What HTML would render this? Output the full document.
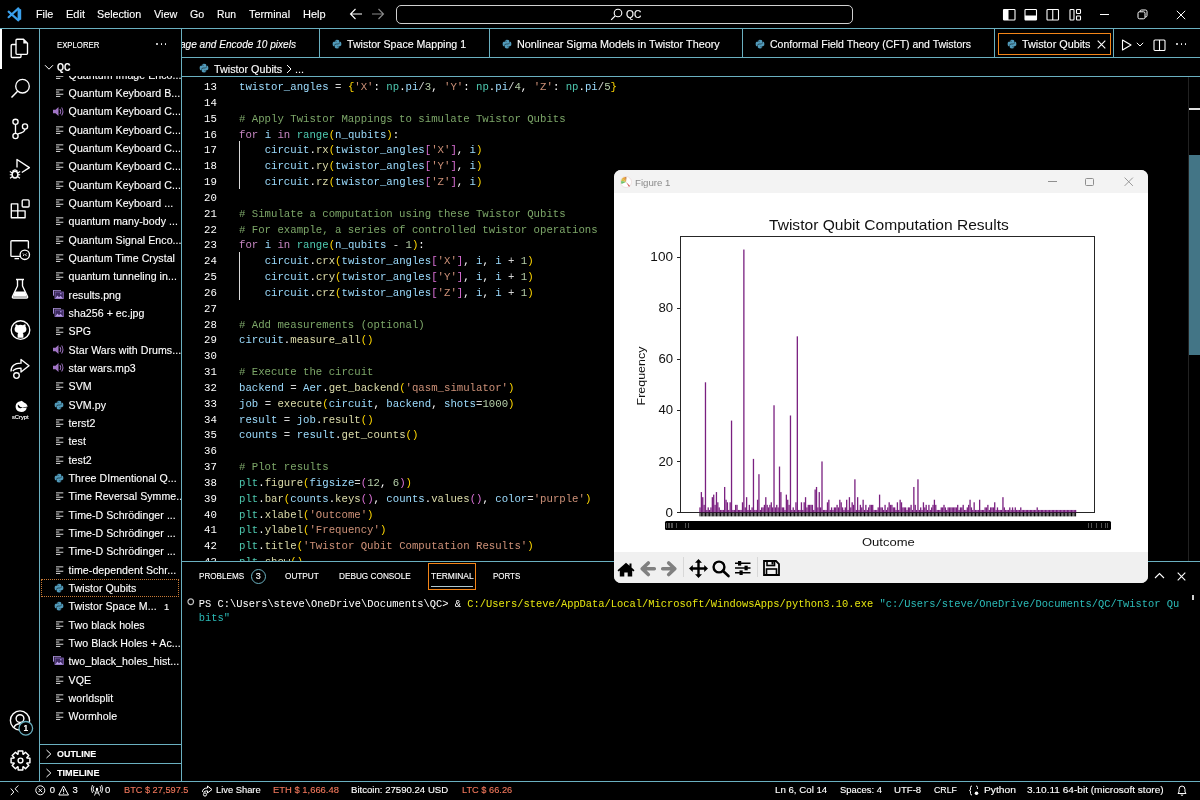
<!DOCTYPE html>
<html><head><meta charset="utf-8"><style>
html,body{margin:0;padding:0;}
body{width:1200px;height:800px;background:#000;position:relative;overflow:hidden;font-family:"Liberation Sans",sans-serif;color:#fff;}
.a{position:absolute;white-space:nowrap;}
.s{-webkit-text-stroke:0.12px currentColor;}
#w{position:absolute;left:0;top:0;width:1200px;height:800px;will-change:transform;background:#000;}
svg.a{overflow:visible;}
</style></head><body><div id="w">
<svg class="a" style="left:7px;top:7px;" width="15" height="15" viewBox="0 0 15 15"><g fill="#3aa0ec"><path d="M10.6 0.8 L14.2 2.4 V12.4 L10.6 14 Z"/></g><path d="M11.4 1.4 L1.6 10.2 M1.6 4.6 L11.4 13.4" stroke="#3aa0ec" stroke-width="2.1" stroke-linecap="round"/></svg>
<div class="a s" style="left:35.70px;transform-origin:0 0;transform:scaleX(0.9984);top:4.06px;line-height:20px;font-size:10.8px;color:#ffffff;">File</div>
<div class="a s" style="left:65.70px;transform-origin:0 0;transform:scaleX(1.0211);top:4.06px;line-height:20px;font-size:10.8px;color:#ffffff;">Edit</div>
<div class="a s" style="left:96.90px;transform-origin:0 0;transform:scaleX(0.9944);top:4.06px;line-height:20px;font-size:10.8px;color:#ffffff;">Selection</div>
<div class="a s" style="left:153.80px;transform-origin:0 0;transform:scaleX(1.0028);top:4.06px;line-height:20px;font-size:10.8px;color:#ffffff;">View</div>
<div class="a s" style="left:189.80px;transform-origin:0 0;transform:scaleX(0.9905);top:4.06px;line-height:20px;font-size:10.8px;color:#ffffff;">Go</div>
<div class="a s" style="left:217.00px;transform-origin:0 0;transform:scaleX(0.9609);top:4.06px;line-height:20px;font-size:10.8px;color:#ffffff;">Run</div>
<div class="a s" style="left:249.00px;transform-origin:0 0;transform:scaleX(1.0067);top:4.06px;line-height:20px;font-size:10.8px;color:#ffffff;">Terminal</div>
<div class="a s" style="left:302.50px;transform-origin:0 0;transform:scaleX(1.0171);top:4.06px;line-height:20px;font-size:10.8px;color:#ffffff;">Help</div>
<svg class="a" style="left:349px;top:8px;" width="14" height="12" viewBox="0 0 14 12"><path d="M1.5 6 H13 M6.5 1 L1.5 6 L6.5 11" stroke="#fff" stroke-width="1.1" fill="none"/></svg>
<svg class="a" style="left:371px;top:8px;" width="14" height="12" viewBox="0 0 14 12"><path d="M1 6 H12.5 M7.5 1 L12.5 6 L7.5 11" stroke="#8a8a8a" stroke-width="1.1" fill="none"/></svg>
<div class="a" style="left:395.5px;top:4.5px;width:457px;height:19.3px;background:transparent;box-sizing:border-box;border:1px solid #d0d0d0;border-radius:5px;"></div>
<svg class="a" style="left:610px;top:8px;" width="13" height="13" viewBox="0 0 13 13"><circle cx="8" cy="5" r="3.8" stroke="#fff" stroke-width="1.1" fill="none"/><path d="M5.2 7.8 L1.2 11.8" stroke="#fff" stroke-width="1.2"/></svg>
<div class="a s" style="left:625.80px;transform-origin:0 0;transform:scaleX(1.0143);top:5.14px;line-height:20px;font-size:10px;color:#ffffff;">QC</div>
<svg class="a" style="left:1002px;top:8px;" width="14" height="13" viewBox="0 0 14 13"><rect x="1.5" y="1.5" width="11.5" height="10.5" stroke="#fff" stroke-width="1.1" fill="none" rx="0.8"/><rect x="1.5" y="1.5" width="5" height="10.5" fill="#fff"/></svg>
<svg class="a" style="left:1024px;top:8px;" width="14" height="13" viewBox="0 0 14 13"><rect x="1" y="1.5" width="11.5" height="10.5" stroke="#fff" stroke-width="1.1" fill="none" rx="0.8"/><rect x="1" y="7.5" width="11.5" height="4.5" fill="#fff"/></svg>
<svg class="a" style="left:1045.5px;top:8px;" width="14" height="13" viewBox="0 0 14 13"><rect x="1" y="1.5" width="11.5" height="10.5" stroke="#fff" stroke-width="1.1" fill="none" rx="0.8"/><path d="M6.75 1.5 V12" stroke="#fff" stroke-width="1.1"/></svg>
<svg class="a" style="left:1068.5px;top:8px;" width="13" height="13" viewBox="0 0 13 13"><rect x="1" y="1.5" width="4" height="10.5" stroke="#fff" stroke-width="1.1" fill="none" rx="0.8"/><rect x="7.5" y="1.5" width="4" height="4" stroke="#fff" stroke-width="1.1" fill="none" rx="0.8"/><rect x="7.5" y="8" width="4" height="4" stroke="#fff" stroke-width="1.1" fill="none" rx="0.8"/></svg>
<div class="a" style="left:1100px;top:13.5px;width:9px;height:1px;background:#ffffff;"></div>
<svg class="a" style="left:1137px;top:9px;" width="12" height="11" viewBox="0 0 12 11"><rect x="1" y="2.8" width="7" height="7" rx="1.5" stroke="#fff" stroke-width="1" fill="none"/><path d="M3 2.8 V2.5 Q3 1 4.5 1 H8.5 Q10 1 10 2.5 V6.5 Q10 8 8.5 8 H8" stroke="#fff" stroke-width="1" fill="none"/></svg>
<svg class="a" style="left:1176px;top:9.5px;" width="10" height="10" viewBox="0 0 10 10"><path d="M0.8 0.8 L9.2 9.2 M9.2 0.8 L0.8 9.2" stroke="#fff" stroke-width="1"/></svg>
<div class="a" style="left:0px;top:28px;width:1200px;height:1px;background:#6AB0C0;"></div>
<div class="a" style="left:39px;top:29px;width:1px;height:752px;background:#6AB0C0;"></div>
<div class="a" style="left:181px;top:29px;width:1px;height:752px;background:#6AB0C0;"></div>
<div class="a" style="left:182px;top:57px;width:1018px;height:1px;background:#6AB0C0;"></div>
<div class="a" style="left:182px;top:76px;width:1018px;height:1px;background:#6AB0C0;"></div>
<div class="a" style="left:182px;top:561px;width:1018px;height:1px;background:#6AB0C0;"></div>
<div class="a" style="left:0px;top:781px;width:1200px;height:1px;background:#6AB0C0;"></div>
<div class="a" style="left:40px;top:744px;width:141px;height:1px;background:#6AB0C0;"></div>
<div class="a" style="left:40px;top:763px;width:141px;height:1px;background:#6AB0C0;"></div>
<div class="a" style="left:0px;top:29px;width:2px;height:40px;background:#ffffff;"></div>
<svg class="a" style="left:10px;top:38px;" width="20" height="22" viewBox="0 0 20 22"><path stroke="#fff" stroke-width="1.35" fill="none" stroke-linejoin="round" d="M6.2 6.5 H2.2 Q1.2 6.5 1.2 7.5 V18.5 Q1.2 19.5 2.2 19.5 H10 Q11 19.5 11 18.5 V16.3"/><path stroke="#fff" stroke-width="1.35" fill="none" stroke-linejoin="round" d="M6 2.2 Q6 1.2 7 1.2 H13.5 L17.5 5.2 V15.3 Q17.5 16.3 16.5 16.3 H7 Q6 16.3 6 15.3 Z"/><path fill="#fff" d="M13.3 1.5 L17.2 5.4 H13.3 Z"/></svg>
<svg class="a" style="left:10px;top:78px;" width="22" height="22" viewBox="0 0 22 22"><circle cx="12.5" cy="8.2" r="6.8" stroke="#fff" stroke-width="1.35" fill="none" stroke-linejoin="round"/><path d="M7.6 13.2 L1.5 19.5" stroke="#fff" stroke-width="1.5"/></svg>
<svg class="a" style="left:10px;top:118px;" width="20" height="22" viewBox="0 0 20 22"><circle cx="5.5" cy="3.8" r="2.6" stroke="#fff" stroke-width="1.35" fill="none" stroke-linejoin="round"/><circle cx="5.5" cy="18" r="2.6" stroke="#fff" stroke-width="1.35" fill="none" stroke-linejoin="round"/><circle cx="15" cy="8.5" r="2.6" stroke="#fff" stroke-width="1.35" fill="none" stroke-linejoin="round"/><path stroke="#fff" stroke-width="1.35" fill="none" stroke-linejoin="round" d="M5.5 6.4 V15.4 M15 11.1 Q15 14.5 8 15.8"/></svg>
<svg class="a" style="left:9px;top:158px;" width="22" height="22" viewBox="0 0 22 22"><path stroke="#fff" stroke-width="1.35" fill="none" stroke-linejoin="round" d="M8 9.4 V1.5 L20.4 9.6 L12.8 14.5"/><path stroke="#fff" stroke-width="1.4" fill="none" d="M3.6 13.2 Q6 10.6 8.4 13.2"/><ellipse cx="6" cy="16.6" rx="2.9" ry="3.4" stroke="#fff" stroke-width="1.5" fill="none"/><path stroke="#fff" stroke-width="1.1" fill="none" d="M0.8 13.6 L3 14.8 M0.8 16.8 H3 M1 20.2 L3.2 18.8 M11.2 13.6 L9 14.8 M11.2 16.8 H9 M11 20.2 L8.8 18.8"/></svg>
<svg class="a" style="left:10px;top:198px;" width="21" height="22" viewBox="0 0 21 22"><path stroke="#fff" stroke-width="1.35" fill="none" stroke-linejoin="round" d="M1.3 5.9 H7.8 V19.7 H1.3 Z M1.3 12.8 H15.1 V19.7 H7.8"/><rect x="12.2" y="1.9" width="6.9" height="7.1" rx="1" stroke="#fff" stroke-width="1.35" fill="none" stroke-linejoin="round"/></svg>
<svg class="a" style="left:9px;top:239px;" width="22" height="22" viewBox="0 0 22 22"><path stroke="#fff" stroke-width="1.35" fill="none" stroke-linejoin="round" d="M12 17.3 H2.8 Q1.9 17.3 1.9 16.4 V2.6 Q1.9 1.7 2.8 1.7 H18.5 Q19.4 1.7 19.4 2.6 V9.5"/><path stroke="#fff" stroke-width="1.35" fill="none" stroke-linejoin="round" d="M5.5 19.6 H10"/><circle cx="15.8" cy="15.8" r="4.7" stroke="#fff" stroke-width="1.35" fill="none" stroke-linejoin="round"/><path stroke="#fff" stroke-width="0.9" fill="none" d="M14 14.5 L15.2 15.8 L14 17.1 M17.6 14.5 L16.4 15.8 L17.6 17.1"/></svg>
<svg class="a" style="left:11px;top:278px;" width="18" height="22" viewBox="0 0 18 22"><path stroke="#fff" stroke-width="1.35" fill="none" stroke-linejoin="round" d="M6.5 1.5 V8 L1.5 18.5 Q1 20 2.5 20 H15.5 Q17 20 16.5 18.5 L11.5 8 V1.5 M5 1.5 H13"/><path fill="#fff" d="M4 13.5 H14 L16 18.8 H2 Z"/></svg>
<svg class="a" style="left:10px;top:319px;" width="21" height="22" viewBox="0 0 21 22"><circle cx="10.5" cy="11" r="9.3" stroke="#fff" stroke-width="1.35" fill="none" stroke-linejoin="round"/><path fill="#fff" d="M7.6 18.8 V15.6 Q7.6 14.6 8.3 14 Q5 13.6 4.6 10.8 Q4.4 8.8 5.5 7.6 Q5.2 6.5 5.7 5.3 Q6.8 5.3 8 6.2 Q10.5 5.5 13 6.2 Q14.2 5.3 15.3 5.3 Q15.8 6.5 15.5 7.6 Q16.6 8.8 16.4 10.8 Q16 13.6 12.7 14 Q13.4 14.6 13.4 15.6 V18.8 Z"/></svg>
<svg class="a" style="left:9px;top:357px;" width="22" height="23" viewBox="0 0 22 23"><path stroke="#fff" stroke-width="1.35" fill="none" stroke-linejoin="round" d="M2 14.5 Q2 6 12 6.2 V2.5 L20 8.8 L12 15 V11.2 Q6.5 11 3.8 14"/><circle cx="7.5" cy="18.5" r="2.8" stroke="#fff" stroke-width="1.35" fill="none" stroke-linejoin="round"/></svg>
<svg class="a" style="left:13px;top:400px;" width="16" height="14" viewBox="0 0 16 14"><path fill="#fff" d="M7.5 1.2 Q3.2 1.6 2.6 6 Q2.4 10 6 11.6 Q9.5 12.8 12.4 10.4 Q13.8 9 13.6 7.2 Q11.5 8.2 9.5 7.8 Q12.5 6.6 14.8 6.4 Q13.5 3.4 11 2.6 Q10 1.2 8.3 0.8 Z"/><path fill="#000" d="M5 4.5 Q6.5 7.2 10 7.4 Q7.2 8.8 5.4 7.6 Q4.2 6.2 5 4.5 Z"/></svg>
<div class="a s" style="left:12.00px;transform-origin:0 0;transform:scaleX(1.1467);top:406.87px;line-height:20px;font-size:5px;color:#ffffff;">sCrypt</div>
<svg class="a" style="left:9px;top:709px;" width="28" height="28" viewBox="0 0 28 28"><circle cx="11" cy="11.5" r="9.6" stroke="#fff" stroke-width="1.4" fill="none"/><circle cx="11" cy="9.6" r="3.9" stroke="#fff" stroke-width="1.4" fill="none"/><path stroke="#fff" stroke-width="1.4" fill="none" d="M5 18.5 Q6.5 14.8 11 14.8 Q13 14.8 14 15.3"/><circle cx="16.8" cy="19.3" r="6.8" fill="#000" stroke="#6AB0C0" stroke-width="1.3"/></svg>
<div class="a s" style="left:23.60px;top:718.42px;line-height:20px;font-size:8.3px;color:#ffffff;font-weight:bold;">1</div>
<svg class="a" style="left:9.5px;top:750.3px;" width="21" height="21" viewBox="0 0 21 21"><path stroke="#fff" stroke-width="1.45" fill="none" stroke-linejoin="round" d="M16.96 8.07 L19.92 8.19 L19.92 12.81 L16.96 12.93 L16.79 13.35 L18.79 15.53 L15.53 18.79 L13.35 16.79 L12.93 16.96 L12.81 19.92 L8.19 19.92 L8.07 16.96 L7.65 16.79 L5.47 18.79 L2.21 15.53 L4.21 13.35 L4.04 12.93 L1.08 12.81 L1.08 8.19 L4.04 8.07 L4.21 7.65 L2.21 5.47 L5.47 2.21 L7.65 4.21 L8.07 4.04 L8.19 1.08 L12.81 1.08 L12.93 4.04 L13.35 4.21 L15.53 2.21 L18.79 5.47 L16.79 7.65 Z"/><circle cx="10.5" cy="10.5" r="2.4" stroke="#fff" stroke-width="1.45" fill="none"/></svg>
<div class="a s" style="left:56.70px;transform-origin:0 0;transform:scaleX(0.8089);top:34.57px;line-height:20px;font-size:9.6px;color:#ffffff;">EXPLORER</div>
<div class="a" style="left:156.3px;top:43.2px;width:1.6px;height:1.6px;background:#ffffff;border-radius:1px;"></div>
<div class="a" style="left:160.60000000000002px;top:43.2px;width:1.6px;height:1.6px;background:#ffffff;border-radius:1px;"></div>
<div class="a" style="left:164.9px;top:43.2px;width:1.6px;height:1.6px;background:#ffffff;border-radius:1px;"></div>
<svg class="a" style="left:43.5px;top:64px;" width="10" height="7" viewBox="0 0 10 7"><path d="M1 1.2 L5 5.2 L9 1.2" stroke="#fff" stroke-width="1" fill="none"/></svg>
<div class="a s" style="left:56.90px;transform-origin:0 0;transform:scaleX(0.9000);top:58.44px;line-height:20px;font-size:10px;color:#ffffff;font-weight:bold;">QC</div>
<div class="a" style="left:40px;top:76px;width:141px;height:668px;overflow:hidden">
<svg class="a" style="left:16px;top:-5.432999999999993px;" width="8" height="9" viewBox="0 0 8 9"><g fill="#c8c8c8"><rect x="0" y="0.3" width="7.3" height="1.1"/><rect x="0" y="2.5" width="3.3" height="1.1"/><rect x="0" y="4.7" width="7.3" height="1.1"/><rect x="0" y="6.9" width="4.3" height="1.1"/></g></svg>
<div class="a s" style="left:28.60px;top:-11.31px;line-height:20px;font-size:10.6px;color:#ffffff;letter-spacing:0.050px;">Quantum Image Enco...</div>
<svg class="a" style="left:16px;top:12.900000000000006px;" width="8" height="9" viewBox="0 0 8 9"><g fill="#c8c8c8"><rect x="0" y="0.3" width="7.3" height="1.1"/><rect x="0" y="2.5" width="3.3" height="1.1"/><rect x="0" y="4.7" width="7.3" height="1.1"/><rect x="0" y="6.9" width="4.3" height="1.1"/></g></svg>
<div class="a s" style="left:28.60px;top:7.03px;line-height:20px;font-size:10.6px;color:#ffffff;letter-spacing:0.050px;">Quantum Keyboard B...</div>
<svg class="a" style="left:13px;top:30.733000000000004px;" width="11" height="9" viewBox="0 0 11 9"><g fill="#a074c4"><path d="M0 2.8 H2.5 L5.5 0 V9 L2.5 6.2 H0 Z"/><path d="M6.5 2.2 Q8 4.5 6.5 6.8 L7.3 7.3 Q9.2 4.5 7.3 1.7 Z"/><path d="M8.2 0.8 Q10.8 4.5 8.2 8.2 L9 8.8 Q11.8 4.5 9 0.2 Z"/></g></svg>
<div class="a s" style="left:28.60px;top:25.36px;line-height:20px;font-size:10.6px;color:#ffffff;letter-spacing:0.050px;">Quantum Keyboard C...</div>
<svg class="a" style="left:16px;top:49.56599999999999px;" width="8" height="9" viewBox="0 0 8 9"><g fill="#c8c8c8"><rect x="0" y="0.3" width="7.3" height="1.1"/><rect x="0" y="2.5" width="3.3" height="1.1"/><rect x="0" y="4.7" width="7.3" height="1.1"/><rect x="0" y="6.9" width="4.3" height="1.1"/></g></svg>
<div class="a s" style="left:28.60px;top:43.69px;line-height:20px;font-size:10.6px;color:#ffffff;letter-spacing:0.050px;">Quantum Keyboard C...</div>
<svg class="a" style="left:16px;top:67.899px;" width="8" height="9" viewBox="0 0 8 9"><g fill="#c8c8c8"><rect x="0" y="0.3" width="7.3" height="1.1"/><rect x="0" y="2.5" width="3.3" height="1.1"/><rect x="0" y="4.7" width="7.3" height="1.1"/><rect x="0" y="6.9" width="4.3" height="1.1"/></g></svg>
<div class="a s" style="left:28.60px;top:62.03px;line-height:20px;font-size:10.6px;color:#ffffff;letter-spacing:0.050px;">Quantum Keyboard C...</div>
<svg class="a" style="left:16px;top:86.23199999999997px;" width="8" height="9" viewBox="0 0 8 9"><g fill="#c8c8c8"><rect x="0" y="0.3" width="7.3" height="1.1"/><rect x="0" y="2.5" width="3.3" height="1.1"/><rect x="0" y="4.7" width="7.3" height="1.1"/><rect x="0" y="6.9" width="4.3" height="1.1"/></g></svg>
<div class="a s" style="left:28.60px;top:80.36px;line-height:20px;font-size:10.6px;color:#ffffff;letter-spacing:0.050px;">Quantum Keyboard C...</div>
<svg class="a" style="left:16px;top:104.565px;" width="8" height="9" viewBox="0 0 8 9"><g fill="#c8c8c8"><rect x="0" y="0.3" width="7.3" height="1.1"/><rect x="0" y="2.5" width="3.3" height="1.1"/><rect x="0" y="4.7" width="7.3" height="1.1"/><rect x="0" y="6.9" width="4.3" height="1.1"/></g></svg>
<div class="a s" style="left:28.60px;top:98.69px;line-height:20px;font-size:10.6px;color:#ffffff;letter-spacing:0.050px;">Quantum Keyboard C...</div>
<svg class="a" style="left:16px;top:122.89799999999997px;" width="8" height="9" viewBox="0 0 8 9"><g fill="#c8c8c8"><rect x="0" y="0.3" width="7.3" height="1.1"/><rect x="0" y="2.5" width="3.3" height="1.1"/><rect x="0" y="4.7" width="7.3" height="1.1"/><rect x="0" y="6.9" width="4.3" height="1.1"/></g></svg>
<div class="a s" style="left:28.60px;top:117.03px;line-height:20px;font-size:10.6px;color:#ffffff;letter-spacing:0.050px;">Quantum Keyboard ...</div>
<svg class="a" style="left:16px;top:141.231px;" width="8" height="9" viewBox="0 0 8 9"><g fill="#c8c8c8"><rect x="0" y="0.3" width="7.3" height="1.1"/><rect x="0" y="2.5" width="3.3" height="1.1"/><rect x="0" y="4.7" width="7.3" height="1.1"/><rect x="0" y="6.9" width="4.3" height="1.1"/></g></svg>
<div class="a s" style="left:28.60px;top:135.36px;line-height:20px;font-size:10.6px;color:#ffffff;letter-spacing:0.050px;">quantum many-body ...</div>
<svg class="a" style="left:16px;top:159.56399999999996px;" width="8" height="9" viewBox="0 0 8 9"><g fill="#c8c8c8"><rect x="0" y="0.3" width="7.3" height="1.1"/><rect x="0" y="2.5" width="3.3" height="1.1"/><rect x="0" y="4.7" width="7.3" height="1.1"/><rect x="0" y="6.9" width="4.3" height="1.1"/></g></svg>
<div class="a s" style="left:28.60px;top:153.69px;line-height:20px;font-size:10.6px;color:#ffffff;letter-spacing:0.050px;">Quantum Signal Enco...</div>
<svg class="a" style="left:16px;top:177.897px;" width="8" height="9" viewBox="0 0 8 9"><g fill="#c8c8c8"><rect x="0" y="0.3" width="7.3" height="1.1"/><rect x="0" y="2.5" width="3.3" height="1.1"/><rect x="0" y="4.7" width="7.3" height="1.1"/><rect x="0" y="6.9" width="4.3" height="1.1"/></g></svg>
<div class="a s" style="left:28.60px;top:172.02px;line-height:20px;font-size:10.6px;color:#ffffff;letter-spacing:0.050px;">Quantum Time Crystal</div>
<svg class="a" style="left:16px;top:196.22999999999996px;" width="8" height="9" viewBox="0 0 8 9"><g fill="#c8c8c8"><rect x="0" y="0.3" width="7.3" height="1.1"/><rect x="0" y="2.5" width="3.3" height="1.1"/><rect x="0" y="4.7" width="7.3" height="1.1"/><rect x="0" y="6.9" width="4.3" height="1.1"/></g></svg>
<div class="a s" style="left:28.60px;top:190.36px;line-height:20px;font-size:10.6px;color:#ffffff;letter-spacing:0.050px;">quantum tunneling in...</div>
<svg class="a" style="left:13px;top:213.563px;" width="11" height="10" viewBox="0 0 11 10"><rect x="0" y="0.2" width="8" height="1" fill="#a890d8"/><rect x="0" y="0.2" width="1" height="5.5" fill="#a890d8"/><rect x="2" y="2" width="8.3" height="6.6" fill="#3c2a60" stroke="#8a6cc0" stroke-width="0.8"/><path fill="#b89ce8" d="M2.4 8.6 L4.4 5.6 L6 7.2 L7.6 5.8 L10 8.6 Z"/><rect x="7" y="3" width="1.6" height="1.4" fill="#9a80d0"/></svg>
<div class="a s" style="left:28.60px;top:208.69px;line-height:20px;font-size:10.6px;color:#ffffff;letter-spacing:0.050px;">results.png</div>
<svg class="a" style="left:13px;top:231.89599999999996px;" width="11" height="10" viewBox="0 0 11 10"><rect x="0" y="0.2" width="8" height="1" fill="#a890d8"/><rect x="0" y="0.2" width="1" height="5.5" fill="#a890d8"/><rect x="2" y="2" width="8.3" height="6.6" fill="#3c2a60" stroke="#8a6cc0" stroke-width="0.8"/><path fill="#b89ce8" d="M2.4 8.6 L4.4 5.6 L6 7.2 L7.6 5.8 L10 8.6 Z"/><rect x="7" y="3" width="1.6" height="1.4" fill="#9a80d0"/></svg>
<div class="a s" style="left:28.60px;top:227.02px;line-height:20px;font-size:10.6px;color:#ffffff;letter-spacing:0.050px;">sha256 + ec.jpg</div>
<svg class="a" style="left:16px;top:251.22899999999998px;" width="8" height="9" viewBox="0 0 8 9"><g fill="#c8c8c8"><rect x="0" y="0.3" width="7.3" height="1.1"/><rect x="0" y="2.5" width="3.3" height="1.1"/><rect x="0" y="4.7" width="7.3" height="1.1"/><rect x="0" y="6.9" width="4.3" height="1.1"/></g></svg>
<div class="a s" style="left:28.60px;top:245.36px;line-height:20px;font-size:10.6px;color:#ffffff;letter-spacing:0.050px;">SPG</div>
<svg class="a" style="left:13px;top:269.06199999999995px;" width="11" height="9" viewBox="0 0 11 9"><g fill="#a074c4"><path d="M0 2.8 H2.5 L5.5 0 V9 L2.5 6.2 H0 Z"/><path d="M6.5 2.2 Q8 4.5 6.5 6.8 L7.3 7.3 Q9.2 4.5 7.3 1.7 Z"/><path d="M8.2 0.8 Q10.8 4.5 8.2 8.2 L9 8.8 Q11.8 4.5 9 0.2 Z"/></g></svg>
<div class="a s" style="left:28.60px;top:263.69px;line-height:20px;font-size:10.6px;color:#ffffff;letter-spacing:0.050px;">Star Wars with Drums...</div>
<svg class="a" style="left:13px;top:287.395px;" width="11" height="9" viewBox="0 0 11 9"><g fill="#a074c4"><path d="M0 2.8 H2.5 L5.5 0 V9 L2.5 6.2 H0 Z"/><path d="M6.5 2.2 Q8 4.5 6.5 6.8 L7.3 7.3 Q9.2 4.5 7.3 1.7 Z"/><path d="M8.2 0.8 Q10.8 4.5 8.2 8.2 L9 8.8 Q11.8 4.5 9 0.2 Z"/></g></svg>
<div class="a s" style="left:28.60px;top:282.02px;line-height:20px;font-size:10.6px;color:#ffffff;letter-spacing:0.050px;">star wars.mp3</div>
<svg class="a" style="left:16px;top:306.22799999999995px;" width="8" height="9" viewBox="0 0 8 9"><g fill="#c8c8c8"><rect x="0" y="0.3" width="7.3" height="1.1"/><rect x="0" y="2.5" width="3.3" height="1.1"/><rect x="0" y="4.7" width="7.3" height="1.1"/><rect x="0" y="6.9" width="4.3" height="1.1"/></g></svg>
<div class="a s" style="left:28.60px;top:300.36px;line-height:20px;font-size:10.6px;color:#ffffff;letter-spacing:0.050px;">SVM</div>
<svg class="a" style="left:14px;top:323.5609999999999px;" width="10" height="10" viewBox="0 0 16 16"><path fill="#519aba" d="M7.9 1C4.4 1 4.6 2.5 4.6 2.5V4h3.4v.5H3.3S1 4.2 1 7.9s2 3.6 2 3.6h1.2V9.7s-.1-2 2-2h3.4s1.9 0 1.9-1.9V2.9S11.8 1 7.9 1zM6 2.1c.3 0 .6.3.6.6s-.3.6-.6.6-.6-.3-.6-.6.3-.6.6-.6z"/><path fill="#519aba" d="M8.1 15c3.5 0 3.3-1.5 3.3-1.5V12H8v-.5h4.7s2.3.3 2.3-3.4-2-3.6-2-3.6h-1.2v1.8s.1 2-2 2H6.4s-1.9 0-1.9 1.9v3.1S4.2 15 8.1 15zm1.9-1.1c-.3 0-.6-.3-.6-.6s.3-.6.6-.6.6.3.6.6-.3.6-.6.6z"/></svg>
<div class="a s" style="left:28.60px;top:318.69px;line-height:20px;font-size:10.6px;color:#ffffff;letter-spacing:0.050px;">SVM.py</div>
<svg class="a" style="left:16px;top:342.89399999999995px;" width="8" height="9" viewBox="0 0 8 9"><g fill="#c8c8c8"><rect x="0" y="0.3" width="7.3" height="1.1"/><rect x="0" y="2.5" width="3.3" height="1.1"/><rect x="0" y="4.7" width="7.3" height="1.1"/><rect x="0" y="6.9" width="4.3" height="1.1"/></g></svg>
<div class="a s" style="left:28.60px;top:337.02px;line-height:20px;font-size:10.6px;color:#ffffff;letter-spacing:0.050px;">terst2</div>
<svg class="a" style="left:16px;top:361.227px;" width="8" height="9" viewBox="0 0 8 9"><g fill="#c8c8c8"><rect x="0" y="0.3" width="7.3" height="1.1"/><rect x="0" y="2.5" width="3.3" height="1.1"/><rect x="0" y="4.7" width="7.3" height="1.1"/><rect x="0" y="6.9" width="4.3" height="1.1"/></g></svg>
<div class="a s" style="left:28.60px;top:355.35px;line-height:20px;font-size:10.6px;color:#ffffff;letter-spacing:0.050px;">test</div>
<svg class="a" style="left:16px;top:379.55999999999995px;" width="8" height="9" viewBox="0 0 8 9"><g fill="#c8c8c8"><rect x="0" y="0.3" width="7.3" height="1.1"/><rect x="0" y="2.5" width="3.3" height="1.1"/><rect x="0" y="4.7" width="7.3" height="1.1"/><rect x="0" y="6.9" width="4.3" height="1.1"/></g></svg>
<div class="a s" style="left:28.60px;top:373.69px;line-height:20px;font-size:10.6px;color:#ffffff;letter-spacing:0.050px;">test2</div>
<svg class="a" style="left:14px;top:396.8929999999999px;" width="10" height="10" viewBox="0 0 16 16"><path fill="#519aba" d="M7.9 1C4.4 1 4.6 2.5 4.6 2.5V4h3.4v.5H3.3S1 4.2 1 7.9s2 3.6 2 3.6h1.2V9.7s-.1-2 2-2h3.4s1.9 0 1.9-1.9V2.9S11.8 1 7.9 1zM6 2.1c.3 0 .6.3.6.6s-.3.6-.6.6-.6-.3-.6-.6.3-.6.6-.6z"/><path fill="#519aba" d="M8.1 15c3.5 0 3.3-1.5 3.3-1.5V12H8v-.5h4.7s2.3.3 2.3-3.4-2-3.6-2-3.6h-1.2v1.8s.1 2-2 2H6.4s-1.9 0-1.9 1.9v3.1S4.2 15 8.1 15zm1.9-1.1c-.3 0-.6-.3-.6-.6s.3-.6.6-.6.6.3.6.6-.3.6-.6.6z"/></svg>
<div class="a s" style="left:28.60px;top:392.02px;line-height:20px;font-size:10.6px;color:#ffffff;letter-spacing:0.050px;">Three DImentional Q...</div>
<svg class="a" style="left:16px;top:416.22599999999994px;" width="8" height="9" viewBox="0 0 8 9"><g fill="#c8c8c8"><rect x="0" y="0.3" width="7.3" height="1.1"/><rect x="0" y="2.5" width="3.3" height="1.1"/><rect x="0" y="4.7" width="7.3" height="1.1"/><rect x="0" y="6.9" width="4.3" height="1.1"/></g></svg>
<div class="a s" style="left:28.60px;top:410.35px;line-height:20px;font-size:10.6px;color:#ffffff;letter-spacing:0.050px;">Time Reversal Symme...</div>
<svg class="a" style="left:16px;top:434.559px;" width="8" height="9" viewBox="0 0 8 9"><g fill="#c8c8c8"><rect x="0" y="0.3" width="7.3" height="1.1"/><rect x="0" y="2.5" width="3.3" height="1.1"/><rect x="0" y="4.7" width="7.3" height="1.1"/><rect x="0" y="6.9" width="4.3" height="1.1"/></g></svg>
<div class="a s" style="left:28.60px;top:428.69px;line-height:20px;font-size:10.6px;color:#ffffff;letter-spacing:0.050px;">Time-D Schr&ouml;dinger ...</div>
<svg class="a" style="left:16px;top:452.89200000000005px;" width="8" height="9" viewBox="0 0 8 9"><g fill="#c8c8c8"><rect x="0" y="0.3" width="7.3" height="1.1"/><rect x="0" y="2.5" width="3.3" height="1.1"/><rect x="0" y="4.7" width="7.3" height="1.1"/><rect x="0" y="6.9" width="4.3" height="1.1"/></g></svg>
<div class="a s" style="left:28.60px;top:447.02px;line-height:20px;font-size:10.6px;color:#ffffff;letter-spacing:0.050px;">Time-D Schr&ouml;dinger ...</div>
<svg class="a" style="left:16px;top:471.225px;" width="8" height="9" viewBox="0 0 8 9"><g fill="#c8c8c8"><rect x="0" y="0.3" width="7.3" height="1.1"/><rect x="0" y="2.5" width="3.3" height="1.1"/><rect x="0" y="4.7" width="7.3" height="1.1"/><rect x="0" y="6.9" width="4.3" height="1.1"/></g></svg>
<div class="a s" style="left:28.60px;top:465.35px;line-height:20px;font-size:10.6px;color:#ffffff;letter-spacing:0.050px;">Time-D Schr&ouml;dinger ...</div>
<svg class="a" style="left:16px;top:489.558px;" width="8" height="9" viewBox="0 0 8 9"><g fill="#c8c8c8"><rect x="0" y="0.3" width="7.3" height="1.1"/><rect x="0" y="2.5" width="3.3" height="1.1"/><rect x="0" y="4.7" width="7.3" height="1.1"/><rect x="0" y="6.9" width="4.3" height="1.1"/></g></svg>
<div class="a s" style="left:28.60px;top:483.69px;line-height:20px;font-size:10.6px;color:#ffffff;letter-spacing:0.050px;">time-dependent Schr...</div>
<svg class="a" style="left:14px;top:506.8910000000001px;" width="10" height="10" viewBox="0 0 16 16"><path fill="#519aba" d="M7.9 1C4.4 1 4.6 2.5 4.6 2.5V4h3.4v.5H3.3S1 4.2 1 7.9s2 3.6 2 3.6h1.2V9.7s-.1-2 2-2h3.4s1.9 0 1.9-1.9V2.9S11.8 1 7.9 1zM6 2.1c.3 0 .6.3.6.6s-.3.6-.6.6-.6-.3-.6-.6.3-.6.6-.6z"/><path fill="#519aba" d="M8.1 15c3.5 0 3.3-1.5 3.3-1.5V12H8v-.5h4.7s2.3.3 2.3-3.4-2-3.6-2-3.6h-1.2v1.8s.1 2-2 2H6.4s-1.9 0-1.9 1.9v3.1S4.2 15 8.1 15zm1.9-1.1c-.3 0-.6-.3-.6-.6s.3-.6.6-.6.6.3.6.6-.3.6-.6.6z"/></svg>
<div class="a s" style="left:28.60px;top:502.02px;line-height:20px;font-size:10.6px;color:#ffffff;letter-spacing:0.050px;">Twistor Qubits</div>
<svg class="a" style="left:14px;top:525.224px;" width="10" height="10" viewBox="0 0 16 16"><path fill="#519aba" d="M7.9 1C4.4 1 4.6 2.5 4.6 2.5V4h3.4v.5H3.3S1 4.2 1 7.9s2 3.6 2 3.6h1.2V9.7s-.1-2 2-2h3.4s1.9 0 1.9-1.9V2.9S11.8 1 7.9 1zM6 2.1c.3 0 .6.3.6.6s-.3.6-.6.6-.6-.3-.6-.6.3-.6.6-.6z"/><path fill="#519aba" d="M8.1 15c3.5 0 3.3-1.5 3.3-1.5V12H8v-.5h4.7s2.3.3 2.3-3.4-2-3.6-2-3.6h-1.2v1.8s.1 2-2 2H6.4s-1.9 0-1.9 1.9v3.1S4.2 15 8.1 15zm1.9-1.1c-.3 0-.6-.3-.6-.6s.3-.6.6-.6.6.3.6.6-.3.6-.6.6z"/></svg>
<div class="a s" style="left:28.60px;top:520.35px;line-height:20px;font-size:10.6px;color:#ffffff;letter-spacing:0.050px;">Twistor Space M...</div>
<svg class="a" style="left:16px;top:544.557px;" width="8" height="9" viewBox="0 0 8 9"><g fill="#c8c8c8"><rect x="0" y="0.3" width="7.3" height="1.1"/><rect x="0" y="2.5" width="3.3" height="1.1"/><rect x="0" y="4.7" width="7.3" height="1.1"/><rect x="0" y="6.9" width="4.3" height="1.1"/></g></svg>
<div class="a s" style="left:28.60px;top:538.68px;line-height:20px;font-size:10.6px;color:#ffffff;letter-spacing:0.050px;">Two black holes</div>
<svg class="a" style="left:16px;top:562.8900000000001px;" width="8" height="9" viewBox="0 0 8 9"><g fill="#c8c8c8"><rect x="0" y="0.3" width="7.3" height="1.1"/><rect x="0" y="2.5" width="3.3" height="1.1"/><rect x="0" y="4.7" width="7.3" height="1.1"/><rect x="0" y="6.9" width="4.3" height="1.1"/></g></svg>
<div class="a s" style="left:28.60px;top:557.02px;line-height:20px;font-size:10.6px;color:#ffffff;letter-spacing:0.050px;">Two Black Holes + Ac...</div>
<svg class="a" style="left:13px;top:580.2230000000001px;" width="11" height="10" viewBox="0 0 11 10"><rect x="0" y="0.2" width="8" height="1" fill="#a890d8"/><rect x="0" y="0.2" width="1" height="5.5" fill="#a890d8"/><rect x="2" y="2" width="8.3" height="6.6" fill="#3c2a60" stroke="#8a6cc0" stroke-width="0.8"/><path fill="#b89ce8" d="M2.4 8.6 L4.4 5.6 L6 7.2 L7.6 5.8 L10 8.6 Z"/><rect x="7" y="3" width="1.6" height="1.4" fill="#9a80d0"/></svg>
<div class="a s" style="left:28.60px;top:575.35px;line-height:20px;font-size:10.6px;color:#ffffff;letter-spacing:0.050px;">two_black_holes_hist...</div>
<svg class="a" style="left:16px;top:599.556px;" width="8" height="9" viewBox="0 0 8 9"><g fill="#c8c8c8"><rect x="0" y="0.3" width="7.3" height="1.1"/><rect x="0" y="2.5" width="3.3" height="1.1"/><rect x="0" y="4.7" width="7.3" height="1.1"/><rect x="0" y="6.9" width="4.3" height="1.1"/></g></svg>
<div class="a s" style="left:28.60px;top:593.68px;line-height:20px;font-size:10.6px;color:#ffffff;letter-spacing:0.050px;">VQE</div>
<svg class="a" style="left:16px;top:617.889px;" width="8" height="9" viewBox="0 0 8 9"><g fill="#c8c8c8"><rect x="0" y="0.3" width="7.3" height="1.1"/><rect x="0" y="2.5" width="3.3" height="1.1"/><rect x="0" y="4.7" width="7.3" height="1.1"/><rect x="0" y="6.9" width="4.3" height="1.1"/></g></svg>
<div class="a s" style="left:28.60px;top:612.02px;line-height:20px;font-size:10.6px;color:#ffffff;letter-spacing:0.050px;">worldsplit</div>
<svg class="a" style="left:16px;top:636.222px;" width="8" height="9" viewBox="0 0 8 9"><g fill="#c8c8c8"><rect x="0" y="0.3" width="7.3" height="1.1"/><rect x="0" y="2.5" width="3.3" height="1.1"/><rect x="0" y="4.7" width="7.3" height="1.1"/><rect x="0" y="6.9" width="4.3" height="1.1"/></g></svg>
<div class="a s" style="left:28.60px;top:630.35px;line-height:20px;font-size:10.6px;color:#ffffff;letter-spacing:0.050px;">Wormhole</div>
</div>
<div class="a" style="left:40.5px;top:579px;width:138.5px;height:17.8px;background:transparent;box-sizing:border-box;border:1px dotted #c87a35;"></div>
<div class="a s" style="left:164.00px;top:597.21px;line-height:20px;font-size:9.5px;color:#ffffff;">1</div>
<svg class="a" style="left:44.5px;top:749px;" width="8" height="10" viewBox="0 0 8 10"><path d="M1.5 1 L5.8 5 L1.5 9" stroke="#fff" stroke-width="1" fill="none"/></svg>
<div class="a s" style="left:56.70px;transform-origin:0 0;transform:scaleX(0.9719);top:744.41px;line-height:20px;font-size:9.2px;color:#ffffff;font-weight:bold;">OUTLINE</div>
<svg class="a" style="left:44.5px;top:767.5px;" width="8" height="10" viewBox="0 0 8 10"><path d="M1.5 1 L5.8 5 L1.5 9" stroke="#fff" stroke-width="1" fill="none"/></svg>
<div class="a s" style="left:56.70px;transform-origin:0 0;transform:scaleX(0.9915);top:762.81px;line-height:20px;font-size:9.2px;color:#ffffff;font-weight:bold;">TIMELINE</div>
<div class="a" style="left:182px;top:29px;width:137px;height:28px;overflow:hidden">
<div class="a s" style="left:113.70px;transform-origin:0 0;transform:scaleX(0.9515) translateX(-100%);top:5.23px;line-height:20px;font-size:10.6px;color:#ffffff;font-style:italic;">age and Encode 10 pixels</div>
</div>
<div class="a" style="left:319px;top:29px;width:1px;height:28px;background:#6AB0C0;"></div>
<div class="a" style="left:489px;top:29px;width:1px;height:28px;background:#6AB0C0;"></div>
<div class="a" style="left:742px;top:29px;width:1px;height:28px;background:#6AB0C0;"></div>
<div class="a" style="left:994px;top:29px;width:1px;height:28px;background:#6AB0C0;"></div>
<div class="a" style="left:1113px;top:29px;width:1px;height:28px;background:#6AB0C0;"></div>
<svg class="a" style="left:331.5px;top:39.2px;" width="10" height="10" viewBox="0 0 16 16"><path fill="#519aba" d="M7.9 1C4.4 1 4.6 2.5 4.6 2.5V4h3.4v.5H3.3S1 4.2 1 7.9s2 3.6 2 3.6h1.2V9.7s-.1-2 2-2h3.4s1.9 0 1.9-1.9V2.9S11.8 1 7.9 1zM6 2.1c.3 0 .6.3.6.6s-.3.6-.6.6-.6-.3-.6-.6.3-.6.6-.6z"/><path fill="#519aba" d="M8.1 15c3.5 0 3.3-1.5 3.3-1.5V12H8v-.5h4.7s2.3.3 2.3-3.4-2-3.6-2-3.6h-1.2v1.8s.1 2-2 2H6.4s-1.9 0-1.9 1.9v3.1S4.2 15 8.1 15zm1.9-1.1c-.3 0-.6-.3-.6-.6s.3-.6.6-.6.6.3.6.6-.3.6-.6.6z"/></svg>
<div class="a s" style="left:347.00px;transform-origin:0 0;transform:scaleX(1.0009);top:34.23px;line-height:20px;font-size:10.6px;color:#ffffff;">Twistor Space Mapping 1</div>
<svg class="a" style="left:502px;top:39.2px;" width="10" height="10" viewBox="0 0 16 16"><path fill="#519aba" d="M7.9 1C4.4 1 4.6 2.5 4.6 2.5V4h3.4v.5H3.3S1 4.2 1 7.9s2 3.6 2 3.6h1.2V9.7s-.1-2 2-2h3.4s1.9 0 1.9-1.9V2.9S11.8 1 7.9 1zM6 2.1c.3 0 .6.3.6.6s-.3.6-.6.6-.6-.3-.6-.6.3-.6.6-.6z"/><path fill="#519aba" d="M8.1 15c3.5 0 3.3-1.5 3.3-1.5V12H8v-.5h4.7s2.3.3 2.3-3.4-2-3.6-2-3.6h-1.2v1.8s.1 2-2 2H6.4s-1.9 0-1.9 1.9v3.1S4.2 15 8.1 15zm1.9-1.1c-.3 0-.6-.3-.6-.6s.3-.6.6-.6.6.3.6.6-.3.6-.6.6z"/></svg>
<div class="a s" style="left:516.70px;transform-origin:0 0;transform:scaleX(1.0204);top:34.23px;line-height:20px;font-size:10.6px;color:#ffffff;">Nonlinear Sigma Models in Twistor Theory</div>
<svg class="a" style="left:755px;top:39.2px;" width="10" height="10" viewBox="0 0 16 16"><path fill="#519aba" d="M7.9 1C4.4 1 4.6 2.5 4.6 2.5V4h3.4v.5H3.3S1 4.2 1 7.9s2 3.6 2 3.6h1.2V9.7s-.1-2 2-2h3.4s1.9 0 1.9-1.9V2.9S11.8 1 7.9 1zM6 2.1c.3 0 .6.3.6.6s-.3.6-.6.6-.6-.3-.6-.6.3-.6.6-.6z"/><path fill="#519aba" d="M8.1 15c3.5 0 3.3-1.5 3.3-1.5V12H8v-.5h4.7s2.3.3 2.3-3.4-2-3.6-2-3.6h-1.2v1.8s.1 2-2 2H6.4s-1.9 0-1.9 1.9v3.1S4.2 15 8.1 15zm1.9-1.1c-.3 0-.6-.3-.6-.6s.3-.6.6-.6.6.3.6.6-.3.6-.6.6z"/></svg>
<div class="a s" style="left:770.00px;transform-origin:0 0;transform:scaleX(0.9889);top:34.23px;line-height:20px;font-size:10.6px;color:#ffffff;">Conformal Field Theory (CFT) and Twistors</div>
<div class="a" style="left:998px;top:32.5px;width:113px;height:22.5px;background:transparent;box-sizing:border-box;border:1px solid #F38518;"></div>
<svg class="a" style="left:1006.8px;top:39.2px;" width="10" height="10" viewBox="0 0 16 16"><path fill="#519aba" d="M7.9 1C4.4 1 4.6 2.5 4.6 2.5V4h3.4v.5H3.3S1 4.2 1 7.9s2 3.6 2 3.6h1.2V9.7s-.1-2 2-2h3.4s1.9 0 1.9-1.9V2.9S11.8 1 7.9 1zM6 2.1c.3 0 .6.3.6.6s-.3.6-.6.6-.6-.3-.6-.6.3-.6.6-.6z"/><path fill="#519aba" d="M8.1 15c3.5 0 3.3-1.5 3.3-1.5V12H8v-.5h4.7s2.3.3 2.3-3.4-2-3.6-2-3.6h-1.2v1.8s.1 2-2 2H6.4s-1.9 0-1.9 1.9v3.1S4.2 15 8.1 15zm1.9-1.1c-.3 0-.6-.3-.6-.6s.3-.6.6-.6.6.3.6.6-.3.6-.6.6z"/></svg>
<div class="a s" style="left:1022.40px;transform-origin:0 0;transform:scaleX(1.0202);top:34.23px;line-height:20px;font-size:10.6px;color:#ffffff;">Twistor Qubits</div>
<svg class="a" style="left:1097px;top:40px;" width="9" height="9" viewBox="0 0 9 9"><path d="M0.7 0.7 L8.3 8.3 M8.3 0.7 L0.7 8.3" stroke="#fff" stroke-width="1.1"/></svg>
<svg class="a" style="left:1121px;top:38.5px;" width="11" height="12" viewBox="0 0 11 12"><path d="M1.5 1 L10 6 L1.5 11 Z" stroke="#fff" stroke-width="1.1" fill="none" stroke-linejoin="round"/></svg>
<svg class="a" style="left:1136px;top:42px;" width="8" height="5" viewBox="0 0 8 5"><path d="M0.8 0.8 L4 4 L7.2 0.8" stroke="#fff" stroke-width="1" fill="none"/></svg>
<svg class="a" style="left:1153px;top:38.5px;" width="13" height="12" viewBox="0 0 13 12"><rect x="1" y="1" width="11" height="10.5" rx="1" stroke="#fff" stroke-width="1.1" fill="none"/><path d="M6.5 1 V11.5" stroke="#fff" stroke-width="1.1"/></svg>
<div class="a" style="left:1176.3px;top:43.4px;width:1.6px;height:1.6px;background:#ffffff;border-radius:1px;"></div>
<div class="a" style="left:1180.5px;top:43.4px;width:1.6px;height:1.6px;background:#ffffff;border-radius:1px;"></div>
<div class="a" style="left:1184.7px;top:43.4px;width:1.6px;height:1.6px;background:#ffffff;border-radius:1px;"></div>
<svg class="a" style="left:198.5px;top:62.8px;" width="10" height="10" viewBox="0 0 16 16"><path fill="#519aba" d="M7.9 1C4.4 1 4.6 2.5 4.6 2.5V4h3.4v.5H3.3S1 4.2 1 7.9s2 3.6 2 3.6h1.2V9.7s-.1-2 2-2h3.4s1.9 0 1.9-1.9V2.9S11.8 1 7.9 1zM6 2.1c.3 0 .6.3.6.6s-.3.6-.6.6-.6-.3-.6-.6.3-.6.6-.6z"/><path fill="#519aba" d="M8.1 15c3.5 0 3.3-1.5 3.3-1.5V12H8v-.5h4.7s2.3.3 2.3-3.4-2-3.6-2-3.6h-1.2v1.8s.1 2-2 2H6.4s-1.9 0-1.9 1.9v3.1S4.2 15 8.1 15zm1.9-1.1c-.3 0-.6-.3-.6-.6s.3-.6.6-.6.6.3.6.6-.3.6-.6.6z"/></svg>
<div class="a s" style="left:213.70px;transform-origin:0 0;transform:scaleX(1.0157);top:58.53px;line-height:20px;font-size:10.6px;color:#ffffff;">Twistor Qubits</div>
<svg class="a" style="left:285.5px;top:63.5px;" width="6" height="10" viewBox="0 0 6 10"><path d="M1 1 L5 5 L1 9" stroke="#fff" stroke-width="1" fill="none"/></svg>
<div class="a s" style="left:295.00px;transform-origin:0 0;transform:scaleX(1.0278);top:58.53px;line-height:20px;font-size:10.6px;color:#ffffff;">...</div>
<div class="a" style="left:182px;top:77px;width:1006px;height:484px;overflow:hidden">
<div class="a" style="left:34.80px;transform:translateX(-100%);top:0.15px;line-height:20px;font-size:10.68px;color:#ffffff;font-family:'Liberation Mono', monospace;white-space:pre;">13</div>
<div class="a" style="left:57.00px;top:0.15px;line-height:20px;font-size:10.68px;color:#ffffff;font-family:'Liberation Mono', monospace;white-space:pre;"><span style="color:#9CDCFE">twistor_angles</span> <span style="color:#D4D4D4">=</span> <span style="color:#FFD700">{</span><span style="color:#CE9178">&#x27;X&#x27;</span><span style="color:#FFFFFF">:</span> <span style="color:#4EC9B0">np</span><span style="color:#FFFFFF">.</span><span style="color:#9CDCFE">pi</span><span style="color:#D4D4D4">/</span><span style="color:#B5CEA8">3</span><span style="color:#FFFFFF">,</span> <span style="color:#CE9178">&#x27;Y&#x27;</span><span style="color:#FFFFFF">:</span> <span style="color:#4EC9B0">np</span><span style="color:#FFFFFF">.</span><span style="color:#9CDCFE">pi</span><span style="color:#D4D4D4">/</span><span style="color:#B5CEA8">4</span><span style="color:#FFFFFF">,</span> <span style="color:#CE9178">&#x27;Z&#x27;</span><span style="color:#FFFFFF">:</span> <span style="color:#4EC9B0">np</span><span style="color:#FFFFFF">.</span><span style="color:#9CDCFE">pi</span><span style="color:#D4D4D4">/</span><span style="color:#B5CEA8">5</span><span style="color:#FFD700">}</span></div>
<div class="a" style="left:34.80px;transform:translateX(-100%);top:15.99px;line-height:20px;font-size:10.68px;color:#ffffff;font-family:'Liberation Mono', monospace;white-space:pre;">14</div>
<div class="a" style="left:34.80px;transform:translateX(-100%);top:31.82px;line-height:20px;font-size:10.68px;color:#ffffff;font-family:'Liberation Mono', monospace;white-space:pre;">15</div>
<div class="a" style="left:57.00px;top:31.82px;line-height:20px;font-size:10.68px;color:#ffffff;font-family:'Liberation Mono', monospace;white-space:pre;"><span style="color:#7CA668"># Apply Twistor Mappings to simulate Twistor Qubits</span></div>
<div class="a" style="left:34.80px;transform:translateX(-100%);top:47.65px;line-height:20px;font-size:10.68px;color:#ffffff;font-family:'Liberation Mono', monospace;white-space:pre;">16</div>
<div class="a" style="left:57.00px;top:47.65px;line-height:20px;font-size:10.68px;color:#ffffff;font-family:'Liberation Mono', monospace;white-space:pre;"><span style="color:#C586C0">for</span> <span style="color:#9CDCFE">i</span> <span style="color:#C586C0">in</span> <span style="color:#4EC9B0">range</span><span style="color:#FFD700">(</span><span style="color:#9CDCFE">n_qubits</span><span style="color:#FFD700">)</span><span style="color:#FFFFFF">:</span></div>
<div class="a" style="left:34.80px;transform:translateX(-100%);top:63.49px;line-height:20px;font-size:10.68px;color:#ffffff;font-family:'Liberation Mono', monospace;white-space:pre;">17</div>
<div class="a" style="left:57.00px;top:63.49px;line-height:20px;font-size:10.68px;color:#ffffff;font-family:'Liberation Mono', monospace;white-space:pre;">    <span style="color:#9CDCFE">circuit</span><span style="color:#FFFFFF">.</span><span style="color:#DCDCAA">rx</span><span style="color:#FFD700">(</span><span style="color:#9CDCFE">twistor_angles</span><span style="color:#DA70D6">[</span><span style="color:#CE9178">&#x27;X&#x27;</span><span style="color:#DA70D6">]</span><span style="color:#FFFFFF">,</span> <span style="color:#9CDCFE">i</span><span style="color:#FFD700">)</span></div>
<div class="a" style="left:34.80px;transform:translateX(-100%);top:79.32px;line-height:20px;font-size:10.68px;color:#ffffff;font-family:'Liberation Mono', monospace;white-space:pre;">18</div>
<div class="a" style="left:57.00px;top:79.32px;line-height:20px;font-size:10.68px;color:#ffffff;font-family:'Liberation Mono', monospace;white-space:pre;">    <span style="color:#9CDCFE">circuit</span><span style="color:#FFFFFF">.</span><span style="color:#DCDCAA">ry</span><span style="color:#FFD700">(</span><span style="color:#9CDCFE">twistor_angles</span><span style="color:#DA70D6">[</span><span style="color:#CE9178">&#x27;Y&#x27;</span><span style="color:#DA70D6">]</span><span style="color:#FFFFFF">,</span> <span style="color:#9CDCFE">i</span><span style="color:#FFD700">)</span></div>
<div class="a" style="left:34.80px;transform:translateX(-100%);top:95.15px;line-height:20px;font-size:10.68px;color:#ffffff;font-family:'Liberation Mono', monospace;white-space:pre;">19</div>
<div class="a" style="left:57.00px;top:95.15px;line-height:20px;font-size:10.68px;color:#ffffff;font-family:'Liberation Mono', monospace;white-space:pre;">    <span style="color:#9CDCFE">circuit</span><span style="color:#FFFFFF">.</span><span style="color:#DCDCAA">rz</span><span style="color:#FFD700">(</span><span style="color:#9CDCFE">twistor_angles</span><span style="color:#DA70D6">[</span><span style="color:#CE9178">&#x27;Z&#x27;</span><span style="color:#DA70D6">]</span><span style="color:#FFFFFF">,</span> <span style="color:#9CDCFE">i</span><span style="color:#FFD700">)</span></div>
<div class="a" style="left:34.80px;transform:translateX(-100%);top:110.98px;line-height:20px;font-size:10.68px;color:#ffffff;font-family:'Liberation Mono', monospace;white-space:pre;">20</div>
<div class="a" style="left:34.80px;transform:translateX(-100%);top:126.82px;line-height:20px;font-size:10.68px;color:#ffffff;font-family:'Liberation Mono', monospace;white-space:pre;">21</div>
<div class="a" style="left:57.00px;top:126.82px;line-height:20px;font-size:10.68px;color:#ffffff;font-family:'Liberation Mono', monospace;white-space:pre;"><span style="color:#7CA668"># Simulate a computation using these Twistor Qubits</span></div>
<div class="a" style="left:34.80px;transform:translateX(-100%);top:142.65px;line-height:20px;font-size:10.68px;color:#ffffff;font-family:'Liberation Mono', monospace;white-space:pre;">22</div>
<div class="a" style="left:57.00px;top:142.65px;line-height:20px;font-size:10.68px;color:#ffffff;font-family:'Liberation Mono', monospace;white-space:pre;"><span style="color:#7CA668"># For example, a series of controlled twistor operations</span></div>
<div class="a" style="left:34.80px;transform:translateX(-100%);top:158.48px;line-height:20px;font-size:10.68px;color:#ffffff;font-family:'Liberation Mono', monospace;white-space:pre;">23</div>
<div class="a" style="left:57.00px;top:158.48px;line-height:20px;font-size:10.68px;color:#ffffff;font-family:'Liberation Mono', monospace;white-space:pre;"><span style="color:#C586C0">for</span> <span style="color:#9CDCFE">i</span> <span style="color:#C586C0">in</span> <span style="color:#4EC9B0">range</span><span style="color:#FFD700">(</span><span style="color:#9CDCFE">n_qubits</span> <span style="color:#D4D4D4">-</span> <span style="color:#B5CEA8">1</span><span style="color:#FFD700">)</span><span style="color:#FFFFFF">:</span></div>
<div class="a" style="left:34.80px;transform:translateX(-100%);top:174.32px;line-height:20px;font-size:10.68px;color:#ffffff;font-family:'Liberation Mono', monospace;white-space:pre;">24</div>
<div class="a" style="left:57.00px;top:174.32px;line-height:20px;font-size:10.68px;color:#ffffff;font-family:'Liberation Mono', monospace;white-space:pre;">    <span style="color:#9CDCFE">circuit</span><span style="color:#FFFFFF">.</span><span style="color:#DCDCAA">crx</span><span style="color:#FFD700">(</span><span style="color:#9CDCFE">twistor_angles</span><span style="color:#DA70D6">[</span><span style="color:#CE9178">&#x27;X&#x27;</span><span style="color:#DA70D6">]</span><span style="color:#FFFFFF">,</span> <span style="color:#9CDCFE">i</span><span style="color:#FFFFFF">,</span> <span style="color:#9CDCFE">i</span> <span style="color:#D4D4D4">+</span> <span style="color:#B5CEA8">1</span><span style="color:#FFD700">)</span></div>
<div class="a" style="left:34.80px;transform:translateX(-100%);top:190.15px;line-height:20px;font-size:10.68px;color:#ffffff;font-family:'Liberation Mono', monospace;white-space:pre;">25</div>
<div class="a" style="left:57.00px;top:190.15px;line-height:20px;font-size:10.68px;color:#ffffff;font-family:'Liberation Mono', monospace;white-space:pre;">    <span style="color:#9CDCFE">circuit</span><span style="color:#FFFFFF">.</span><span style="color:#DCDCAA">cry</span><span style="color:#FFD700">(</span><span style="color:#9CDCFE">twistor_angles</span><span style="color:#DA70D6">[</span><span style="color:#CE9178">&#x27;Y&#x27;</span><span style="color:#DA70D6">]</span><span style="color:#FFFFFF">,</span> <span style="color:#9CDCFE">i</span><span style="color:#FFFFFF">,</span> <span style="color:#9CDCFE">i</span> <span style="color:#D4D4D4">+</span> <span style="color:#B5CEA8">1</span><span style="color:#FFD700">)</span></div>
<div class="a" style="left:34.80px;transform:translateX(-100%);top:205.98px;line-height:20px;font-size:10.68px;color:#ffffff;font-family:'Liberation Mono', monospace;white-space:pre;">26</div>
<div class="a" style="left:57.00px;top:205.98px;line-height:20px;font-size:10.68px;color:#ffffff;font-family:'Liberation Mono', monospace;white-space:pre;">    <span style="color:#9CDCFE">circuit</span><span style="color:#FFFFFF">.</span><span style="color:#DCDCAA">crz</span><span style="color:#FFD700">(</span><span style="color:#9CDCFE">twistor_angles</span><span style="color:#DA70D6">[</span><span style="color:#CE9178">&#x27;Z&#x27;</span><span style="color:#DA70D6">]</span><span style="color:#FFFFFF">,</span> <span style="color:#9CDCFE">i</span><span style="color:#FFFFFF">,</span> <span style="color:#9CDCFE">i</span> <span style="color:#D4D4D4">+</span> <span style="color:#B5CEA8">1</span><span style="color:#FFD700">)</span></div>
<div class="a" style="left:34.80px;transform:translateX(-100%);top:221.82px;line-height:20px;font-size:10.68px;color:#ffffff;font-family:'Liberation Mono', monospace;white-space:pre;">27</div>
<div class="a" style="left:34.80px;transform:translateX(-100%);top:237.65px;line-height:20px;font-size:10.68px;color:#ffffff;font-family:'Liberation Mono', monospace;white-space:pre;">28</div>
<div class="a" style="left:57.00px;top:237.65px;line-height:20px;font-size:10.68px;color:#ffffff;font-family:'Liberation Mono', monospace;white-space:pre;"><span style="color:#7CA668"># Add measurements (optional)</span></div>
<div class="a" style="left:34.80px;transform:translateX(-100%);top:253.48px;line-height:20px;font-size:10.68px;color:#ffffff;font-family:'Liberation Mono', monospace;white-space:pre;">29</div>
<div class="a" style="left:57.00px;top:253.48px;line-height:20px;font-size:10.68px;color:#ffffff;font-family:'Liberation Mono', monospace;white-space:pre;"><span style="color:#9CDCFE">circuit</span><span style="color:#FFFFFF">.</span><span style="color:#DCDCAA">measure_all</span><span style="color:#FFD700">(</span><span style="color:#FFD700">)</span></div>
<div class="a" style="left:34.80px;transform:translateX(-100%);top:269.31px;line-height:20px;font-size:10.68px;color:#ffffff;font-family:'Liberation Mono', monospace;white-space:pre;">30</div>
<div class="a" style="left:34.80px;transform:translateX(-100%);top:285.15px;line-height:20px;font-size:10.68px;color:#ffffff;font-family:'Liberation Mono', monospace;white-space:pre;">31</div>
<div class="a" style="left:57.00px;top:285.15px;line-height:20px;font-size:10.68px;color:#ffffff;font-family:'Liberation Mono', monospace;white-space:pre;"><span style="color:#7CA668"># Execute the circuit</span></div>
<div class="a" style="left:34.80px;transform:translateX(-100%);top:300.98px;line-height:20px;font-size:10.68px;color:#ffffff;font-family:'Liberation Mono', monospace;white-space:pre;">32</div>
<div class="a" style="left:57.00px;top:300.98px;line-height:20px;font-size:10.68px;color:#ffffff;font-family:'Liberation Mono', monospace;white-space:pre;"><span style="color:#9CDCFE">backend</span> <span style="color:#D4D4D4">=</span> <span style="color:#9CDCFE">Aer</span><span style="color:#FFFFFF">.</span><span style="color:#DCDCAA">get_backend</span><span style="color:#FFD700">(</span><span style="color:#CE9178">&#x27;qasm_simulator&#x27;</span><span style="color:#FFD700">)</span></div>
<div class="a" style="left:34.80px;transform:translateX(-100%);top:316.81px;line-height:20px;font-size:10.68px;color:#ffffff;font-family:'Liberation Mono', monospace;white-space:pre;">33</div>
<div class="a" style="left:57.00px;top:316.81px;line-height:20px;font-size:10.68px;color:#ffffff;font-family:'Liberation Mono', monospace;white-space:pre;"><span style="color:#9CDCFE">job</span> <span style="color:#D4D4D4">=</span> <span style="color:#DCDCAA">execute</span><span style="color:#FFD700">(</span><span style="color:#9CDCFE">circuit</span><span style="color:#FFFFFF">,</span> <span style="color:#9CDCFE">backend</span><span style="color:#FFFFFF">,</span> <span style="color:#9CDCFE">shots</span><span style="color:#D4D4D4">=</span><span style="color:#B5CEA8">1000</span><span style="color:#FFD700">)</span></div>
<div class="a" style="left:34.80px;transform:translateX(-100%);top:332.65px;line-height:20px;font-size:10.68px;color:#ffffff;font-family:'Liberation Mono', monospace;white-space:pre;">34</div>
<div class="a" style="left:57.00px;top:332.65px;line-height:20px;font-size:10.68px;color:#ffffff;font-family:'Liberation Mono', monospace;white-space:pre;"><span style="color:#9CDCFE">result</span> <span style="color:#D4D4D4">=</span> <span style="color:#9CDCFE">job</span><span style="color:#FFFFFF">.</span><span style="color:#DCDCAA">result</span><span style="color:#FFD700">(</span><span style="color:#FFD700">)</span></div>
<div class="a" style="left:34.80px;transform:translateX(-100%);top:348.48px;line-height:20px;font-size:10.68px;color:#ffffff;font-family:'Liberation Mono', monospace;white-space:pre;">35</div>
<div class="a" style="left:57.00px;top:348.48px;line-height:20px;font-size:10.68px;color:#ffffff;font-family:'Liberation Mono', monospace;white-space:pre;"><span style="color:#9CDCFE">counts</span> <span style="color:#D4D4D4">=</span> <span style="color:#9CDCFE">result</span><span style="color:#FFFFFF">.</span><span style="color:#DCDCAA">get_counts</span><span style="color:#FFD700">(</span><span style="color:#FFD700">)</span></div>
<div class="a" style="left:34.80px;transform:translateX(-100%);top:364.31px;line-height:20px;font-size:10.68px;color:#ffffff;font-family:'Liberation Mono', monospace;white-space:pre;">36</div>
<div class="a" style="left:34.80px;transform:translateX(-100%);top:380.15px;line-height:20px;font-size:10.68px;color:#ffffff;font-family:'Liberation Mono', monospace;white-space:pre;">37</div>
<div class="a" style="left:57.00px;top:380.15px;line-height:20px;font-size:10.68px;color:#ffffff;font-family:'Liberation Mono', monospace;white-space:pre;"><span style="color:#7CA668"># Plot results</span></div>
<div class="a" style="left:34.80px;transform:translateX(-100%);top:395.98px;line-height:20px;font-size:10.68px;color:#ffffff;font-family:'Liberation Mono', monospace;white-space:pre;">38</div>
<div class="a" style="left:57.00px;top:395.98px;line-height:20px;font-size:10.68px;color:#ffffff;font-family:'Liberation Mono', monospace;white-space:pre;"><span style="color:#4EC9B0">plt</span><span style="color:#FFFFFF">.</span><span style="color:#DCDCAA">figure</span><span style="color:#FFD700">(</span><span style="color:#9CDCFE">figsize</span><span style="color:#D4D4D4">=</span><span style="color:#DA70D6">(</span><span style="color:#B5CEA8">12</span><span style="color:#FFFFFF">,</span> <span style="color:#B5CEA8">6</span><span style="color:#DA70D6">)</span><span style="color:#FFD700">)</span></div>
<div class="a" style="left:34.80px;transform:translateX(-100%);top:411.81px;line-height:20px;font-size:10.68px;color:#ffffff;font-family:'Liberation Mono', monospace;white-space:pre;">39</div>
<div class="a" style="left:57.00px;top:411.81px;line-height:20px;font-size:10.68px;color:#ffffff;font-family:'Liberation Mono', monospace;white-space:pre;"><span style="color:#4EC9B0">plt</span><span style="color:#FFFFFF">.</span><span style="color:#DCDCAA">bar</span><span style="color:#FFD700">(</span><span style="color:#9CDCFE">counts</span><span style="color:#FFFFFF">.</span><span style="color:#DCDCAA">keys</span><span style="color:#DA70D6">(</span><span style="color:#DA70D6">)</span><span style="color:#FFFFFF">,</span> <span style="color:#9CDCFE">counts</span><span style="color:#FFFFFF">.</span><span style="color:#DCDCAA">values</span><span style="color:#DA70D6">(</span><span style="color:#DA70D6">)</span><span style="color:#FFFFFF">,</span> <span style="color:#9CDCFE">color</span><span style="color:#D4D4D4">=</span><span style="color:#CE9178">&#x27;purple&#x27;</span><span style="color:#FFD700">)</span></div>
<div class="a" style="left:34.80px;transform:translateX(-100%);top:427.64px;line-height:20px;font-size:10.68px;color:#ffffff;font-family:'Liberation Mono', monospace;white-space:pre;">40</div>
<div class="a" style="left:57.00px;top:427.64px;line-height:20px;font-size:10.68px;color:#ffffff;font-family:'Liberation Mono', monospace;white-space:pre;"><span style="color:#4EC9B0">plt</span><span style="color:#FFFFFF">.</span><span style="color:#DCDCAA">xlabel</span><span style="color:#FFD700">(</span><span style="color:#CE9178">&#x27;Outcome&#x27;</span><span style="color:#FFD700">)</span></div>
<div class="a" style="left:34.80px;transform:translateX(-100%);top:443.48px;line-height:20px;font-size:10.68px;color:#ffffff;font-family:'Liberation Mono', monospace;white-space:pre;">41</div>
<div class="a" style="left:57.00px;top:443.48px;line-height:20px;font-size:10.68px;color:#ffffff;font-family:'Liberation Mono', monospace;white-space:pre;"><span style="color:#4EC9B0">plt</span><span style="color:#FFFFFF">.</span><span style="color:#DCDCAA">ylabel</span><span style="color:#FFD700">(</span><span style="color:#CE9178">&#x27;Frequency&#x27;</span><span style="color:#FFD700">)</span></div>
<div class="a" style="left:34.80px;transform:translateX(-100%);top:459.31px;line-height:20px;font-size:10.68px;color:#ffffff;font-family:'Liberation Mono', monospace;white-space:pre;">42</div>
<div class="a" style="left:57.00px;top:459.31px;line-height:20px;font-size:10.68px;color:#ffffff;font-family:'Liberation Mono', monospace;white-space:pre;"><span style="color:#4EC9B0">plt</span><span style="color:#FFFFFF">.</span><span style="color:#DCDCAA">title</span><span style="color:#FFD700">(</span><span style="color:#CE9178">&#x27;Twistor Qubit Computation Results&#x27;</span><span style="color:#FFD700">)</span></div>
<div class="a" style="left:34.80px;transform:translateX(-100%);top:475.14px;line-height:20px;font-size:10.68px;color:#ffffff;font-family:'Liberation Mono', monospace;white-space:pre;">43</div>
<div class="a" style="left:57.00px;top:475.14px;line-height:20px;font-size:10.68px;color:#ffffff;font-family:'Liberation Mono', monospace;white-space:pre;"><span style="color:#4EC9B0">plt</span><span style="color:#FFFFFF">.</span><span style="color:#DCDCAA">show</span><span style="color:#FFD700">(</span><span style="color:#FFD700">)</span></div>
<div class="a" style="left:57px;top:64.43199999999999px;width:1px;height:47.49600000000001px;background:#d8d8d8;"></div>
<div class="a" style="left:57px;top:175.263px;width:1px;height:47.49600000000001px;background:#d8d8d8;"></div>
</div>
<div class="a" style="left:1188px;top:77px;width:1px;height:484px;background:#222222;"></div>
<div class="a" style="left:1189px;top:154.5px;width:11px;height:200.5px;background:#437586;"></div>
<div class="a" style="left:1189px;top:108px;width:11px;height:2px;background:#e0e0e0;"></div>
<div class="a s" style="left:198.75px;transform-origin:0 0;transform:scaleX(0.8835);top:566.41px;line-height:20px;font-size:9.2px;color:#ffffff;">PROBLEMS</div>
<div class="a" style="left:251px;top:568.8px;width:15px;height:15px;background:transparent;box-sizing:border-box;border:1.1px solid #6AB0C0;border-radius:50%;"></div>
<div class="a s" style="left:255.80px;top:566.48px;line-height:20px;font-size:9px;color:#ffffff;">3</div>
<div class="a s" style="left:285.00px;transform-origin:0 0;transform:scaleX(0.8952);top:566.41px;line-height:20px;font-size:9.2px;color:#ffffff;">OUTPUT</div>
<div class="a s" style="left:339.00px;transform-origin:0 0;transform:scaleX(0.8961);top:566.41px;line-height:20px;font-size:9.2px;color:#ffffff;">DEBUG CONSOLE</div>
<div class="a s" style="left:430.75px;transform-origin:0 0;transform:scaleX(0.9177);top:566.41px;line-height:20px;font-size:9.2px;color:#ffffff;">TERMINAL</div>
<div class="a s" style="left:492.80px;transform-origin:0 0;transform:scaleX(0.8670);top:566.41px;line-height:20px;font-size:9.2px;color:#ffffff;">PORTS</div>
<div class="a" style="left:427.5px;top:562.5px;width:48.3px;height:27px;background:transparent;box-sizing:border-box;border:1px solid #F38518;"></div>
<div class="a" style="left:431px;top:586.3px;width:42px;height:1px;background:#b0c8d0;"></div>
<svg class="a" style="left:1154px;top:572px;" width="11" height="7" viewBox="0 0 11 7"><path d="M1 6 L5.5 1.5 L10 6" stroke="#fff" stroke-width="1.1" fill="none"/></svg>
<svg class="a" style="left:1176.5px;top:571.5px;" width="9" height="9" viewBox="0 0 9 9"><path d="M0.7 0.7 L8.3 8.3 M8.3 0.7 L0.7 8.3" stroke="#fff" stroke-width="1.1"/></svg>
<svg class="a" style="left:186.5px;top:598px;" width="7.5" height="7.5" viewBox="0 0 7.5 7.5"><circle cx="3.75" cy="3.75" r="2.8" stroke="#c0c0c0" stroke-width="1.2" fill="none"/></svg>
<div class="a" style="left:198.70px;top:593.62px;line-height:20px;font-size:10.42px;color:#fff;font-family:'Liberation Mono', monospace;white-space:pre;"><span style="color:#fff">PS C:\Users\steve\OneDrive\Documents\QC&gt; &amp; </span><span style="color:#E5E510">C:/Users/steve/AppData/Local/Microsoft/WindowsApps/python3.10.exe</span> <span style="color:#2BBBB8">"c:/Users/steve/OneDrive/Documents/QC/Twistor Qu</span></div>
<div class="a" style="left:198.70px;top:607.62px;line-height:20px;font-size:10.42px;color:#2BBBB8;font-family:'Liberation Mono', monospace;white-space:pre;">bits"</div>
<div class="a" style="left:1191.5px;top:595px;width:2.5px;height:4.5px;background:#d0d0d0;"></div>
<svg class="a" style="left:10px;top:784.5px;" width="9" height="11" viewBox="0 0 9 11"><path d="M0.8 3.5 L3.8 7 L0.8 10.2 M8.3 0.5 L5 3.8 L8.3 7" stroke="#fff" stroke-width="1" fill="none"/></svg>
<svg class="a" style="left:35.3px;top:785.3px;" width="11" height="11" viewBox="0 0 11 11"><circle cx="5.3" cy="5.3" r="4.5" stroke="#fff" stroke-width="1" fill="none"/><path d="M3.5 3.5 L7.1 7.1 M7.1 3.5 L3.5 7.1" stroke="#fff" stroke-width="1"/></svg>
<div class="a s" style="left:49.70px;top:780.41px;line-height:20px;font-size:9.5px;color:#fff;">0</div>
<svg class="a" style="left:57.8px;top:785px;" width="11.5" height="11" viewBox="0 0 11.5 11"><path d="M5.5 1 L10.5 10 H0.8 Z" stroke="#fff" stroke-width="1" fill="none" stroke-linejoin="round"/><path d="M5.6 4 V7.2 M5.6 8.2 V9" stroke="#fff" stroke-width="1"/></svg>
<div class="a s" style="left:72.50px;top:780.41px;line-height:20px;font-size:9.5px;color:#fff;">3</div>
<svg class="a" style="left:91px;top:785px;" width="12" height="11" viewBox="0 0 12 11"><circle cx="6" cy="4" r="1.2" fill="#fff"/><path d="M6 4 L3.5 10.5 M6 4 L8.5 10.5 M4.5 8 H7.5 M3 1.2 Q1 4 3 6.8 M9 1.2 Q11 4 9 6.8 M1.5 0 Q-1 4 1.5 8 M10.5 0 Q13 4 10.5 8" stroke="#fff" stroke-width="0.9" fill="none"/></svg>
<div class="a s" style="left:105.00px;top:780.41px;line-height:20px;font-size:9.5px;color:#fff;">0</div>
<div class="a s" style="left:124.00px;transform-origin:0 0;transform:scaleX(0.9680);top:780.41px;line-height:20px;font-size:9.5px;color:#F2785C;">BTC $ 27,597.5</div>
<svg class="a" style="left:200.5px;top:784.5px;" width="12" height="12" viewBox="0 0 12 12"><path d="M1.5 7 Q1.5 3 6.5 3 V1 L11 4.5 L6.5 8 V5.8 Q3.5 5.8 2.5 7.5" stroke="#fff" stroke-width="1" fill="none" stroke-linejoin="round"/><circle cx="4" cy="9.5" r="1.6" stroke="#fff" stroke-width="1" fill="none"/></svg>
<div class="a s" style="left:215.60px;transform-origin:0 0;transform:scaleX(0.9826);top:780.41px;line-height:20px;font-size:9.5px;color:#fff;">Live Share</div>
<div class="a s" style="left:273.30px;transform-origin:0 0;transform:scaleX(0.9909);top:780.41px;line-height:20px;font-size:9.5px;color:#F2785C;">ETH $ 1,666.48</div>
<div class="a s" style="left:351.40px;transform-origin:0 0;transform:scaleX(1.0108);top:780.41px;line-height:20px;font-size:9.5px;color:#fff;">Bitcoin: 27590.24 USD</div>
<div class="a s" style="left:462.20px;transform-origin:0 0;transform:scaleX(0.9738);top:780.41px;line-height:20px;font-size:9.5px;color:#F2785C;">LTC $ 66.26</div>
<div class="a s" style="left:775.40px;transform-origin:0 0;transform:scaleX(1.0202);top:780.41px;line-height:20px;font-size:9.5px;color:#fff;">Ln 6, Col 14</div>
<div class="a s" style="left:840.00px;transform-origin:0 0;transform:scaleX(0.9927);top:780.41px;line-height:20px;font-size:9.5px;color:#fff;">Spaces: 4</div>
<div class="a s" style="left:893.80px;transform-origin:0 0;transform:scaleX(1.0088);top:780.41px;line-height:20px;font-size:9.5px;color:#fff;">UTF-8</div>
<div class="a s" style="left:934.00px;transform-origin:0 0;transform:scaleX(0.9219);top:780.41px;line-height:20px;font-size:9.5px;color:#fff;">CRLF</div>
<svg class="a" style="left:968.5px;top:785px;" width="12" height="11" viewBox="0 0 12 11"><path d="M3 1 Q1.5 1 1.5 2.5 V4 Q1.5 5.5 0.5 5.5 Q1.5 5.5 1.5 7 V8.5 Q1.5 10 3 10" stroke="#fff" stroke-width="1" fill="none"/><circle cx="7.5" cy="8.3" r="1.8" fill="#fff"/><path d="M7 1 Q8.5 1 8.5 2.5 V4" stroke="#fff" stroke-width="1" fill="none"/></svg>
<div class="a s" style="left:983.60px;transform-origin:0 0;transform:scaleX(1.0829);top:780.41px;line-height:20px;font-size:9.5px;color:#fff;">Python</div>
<div class="a s" style="left:1026.70px;transform-origin:0 0;transform:scaleX(1.0618);top:780.41px;line-height:20px;font-size:9.5px;color:#fff;">3.10.11 64-bit (microsoft store)</div>
<svg class="a" style="left:1176.5px;top:785px;" width="10" height="11" viewBox="0 0 10 11"><path d="M1 8.5 H9 L8 7 V4.5 Q8 1 5 1 Q2 1 2 4.5 V7 Z M3.8 9.8 Q5 11 6.2 9.8" stroke="#fff" stroke-width="1" fill="none" stroke-linejoin="round"/></svg>
<div class="a" style="left:614px;top:170px;width:534px;height:413px;background:#ffffff;border-radius:7px;overflow:hidden">
<div class="a" style="left:0px;top:0px;width:534px;height:23px;background:#f3f3f3;"></div>
<div class="a" style="left:0px;top:382px;width:534px;height:31px;background:#f0f0f0;"></div>
<svg class="a" style="left:6px;top:5.5px;" width="12" height="12" viewBox="0 0 12 12"><circle cx="6" cy="6" r="5.5" fill="#fff" stroke="#e8d0d0" stroke-width="0.6"/><path d="M6 6 L2 2.5 A5 5 0 0 1 5 1 Z" fill="#e9a93a"/><path d="M6 6 L1.2 5 A5 5 0 0 1 2 2.5 Z" fill="#d0c040"/><path d="M6 6 L1.5 8 A5 5 0 0 1 1.2 5 Z" fill="#6bbf6b"/><path d="M6 6 L10 10 L9 10.8 Z" fill="#cc4444"/><path d="M6 6 L5 1 L6.5 1.2 Z" fill="#c07030"/></svg>
<div class="a" style="left:21.00px;transform-origin:0 0;transform:scaleX(1.0174);top:2.91px;line-height:20px;font-size:9.5px;color:#8a8a8a;">Figure 1</div>
<div class="a" style="left:434px;top:11px;width:8.5px;height:1px;background:#8f8f8f;"></div>
<div class="a" style="left:471px;top:7.5px;width:9px;height:8.5px;background:transparent;box-sizing:border-box;border:1px solid #8f8f8f;border-radius:1.5px;"></div>
<svg class="a" style="left:509.5px;top:7px;" width="9.5" height="9.5" viewBox="0 0 9.5 9.5"><path d="M0.6 0.6 L8.9 8.9 M8.9 0.6 L0.6 8.9" stroke="#8f8f8f" stroke-width="0.9"/></svg>
<div class="a" style="left:154.70px;transform-origin:0 0;transform:scaleX(1.0981);top:45.38px;line-height:20px;font-size:14.2px;color:#111111;">Twistor Qubit Computation Results</div>
<div class="a" style="left:66.39999999999998px;top:66.4px;width:415px;height:276.6px;background:transparent;box-sizing:border-box;border:1.25px solid #262626;"></div>
<div class="a" style="left:62.60000000000002px;top:341.9px;width:4.2px;height:1.2px;background:#222;"></div>
<div class="a" style="left:59.40px;transform-origin:0 0;transform:scaleX(1.1042) translateX(-100%);top:332.61px;line-height:20px;font-size:12.1px;color:#111;">0</div>
<div class="a" style="left:62.60000000000002px;top:290.84px;width:4.2px;height:1.2px;background:#222;"></div>
<div class="a" style="left:59.40px;transform-origin:0 0;transform:scaleX(1.0863) translateX(-100%);top:281.55px;line-height:20px;font-size:12.1px;color:#111;">20</div>
<div class="a" style="left:62.60000000000002px;top:239.77999999999997px;width:4.2px;height:1.2px;background:#222;"></div>
<div class="a" style="left:59.40px;transform-origin:0 0;transform:scaleX(1.0863) translateX(-100%);top:230.49px;line-height:20px;font-size:12.1px;color:#111;">40</div>
<div class="a" style="left:62.60000000000002px;top:188.71999999999997px;width:4.2px;height:1.2px;background:#222;"></div>
<div class="a" style="left:59.40px;transform-origin:0 0;transform:scaleX(1.0863) translateX(-100%);top:179.43px;line-height:20px;font-size:12.1px;color:#111;">60</div>
<div class="a" style="left:62.60000000000002px;top:137.65999999999997px;width:4.2px;height:1.2px;background:#222;"></div>
<div class="a" style="left:59.40px;transform-origin:0 0;transform:scaleX(1.0863) translateX(-100%);top:128.37px;line-height:20px;font-size:12.1px;color:#111;">80</div>
<div class="a" style="left:62.60000000000002px;top:86.60000000000002px;width:4.2px;height:1.2px;background:#222;"></div>
<div class="a" style="left:59.40px;transform-origin:0 0;transform:scaleX(1.1224) translateX(-100%);top:77.31px;line-height:20px;font-size:12.1px;color:#111;">100</div>
<div class="a" style="left:-13.00px;top:196.20px;width:80px;height:20px;line-height:20px;text-align:center;font-size:11.8px;color:#111;transform:rotate(-90deg) scaleX(1.055)">Frequency</div>
<div class="a" style="left:247.80px;transform-origin:0 0;transform:scaleX(1.1029);top:361.91px;line-height:20px;font-size:11.8px;color:#111;">Outcome</div>
<svg class="a" style="left:0;top:0" width="534" height="413" viewBox="0 0 534 413"><g fill="#7a2080"><rect x="85.35" y="337.39" width="1.3" height="5.11"/><rect x="86.72" y="322.08" width="1.3" height="20.42"/><rect x="88.09" y="327.18" width="1.3" height="15.32"/><rect x="89.46" y="334.84" width="1.3" height="7.66"/><rect x="90.83" y="212.30" width="1.3" height="130.20"/><rect x="92.20" y="339.95" width="1.3" height="2.55"/><rect x="93.57" y="337.39" width="1.3" height="5.11"/><rect x="94.95" y="339.95" width="1.3" height="2.55"/><rect x="96.32" y="337.39" width="1.3" height="5.11"/><rect x="97.69" y="327.18" width="1.3" height="15.32"/><rect x="99.06" y="324.63" width="1.3" height="17.87"/><rect x="100.43" y="334.84" width="1.3" height="7.66"/><rect x="101.80" y="322.08" width="1.3" height="20.42"/><rect x="103.17" y="332.29" width="1.3" height="10.21"/><rect x="104.54" y="337.39" width="1.3" height="5.11"/><rect x="105.91" y="339.95" width="1.3" height="2.55"/><rect x="107.28" y="339.95" width="1.3" height="2.55"/><rect x="108.65" y="339.95" width="1.3" height="2.55"/><rect x="110.02" y="316.97" width="1.3" height="25.53"/><rect x="111.40" y="329.74" width="1.3" height="12.77"/><rect x="112.77" y="332.29" width="1.3" height="10.21"/><rect x="114.14" y="339.95" width="1.3" height="2.55"/><rect x="115.51" y="332.29" width="1.3" height="10.21"/><rect x="116.88" y="250.59" width="1.3" height="91.91"/><rect x="118.25" y="339.95" width="1.3" height="2.55"/><rect x="119.62" y="339.95" width="1.3" height="2.55"/><rect x="120.99" y="334.84" width="1.3" height="7.66"/><rect x="122.36" y="334.84" width="1.3" height="7.66"/><rect x="123.73" y="339.95" width="1.3" height="2.55"/><rect x="125.10" y="339.95" width="1.3" height="2.55"/><rect x="126.47" y="339.95" width="1.3" height="2.55"/><rect x="127.84" y="332.29" width="1.3" height="10.21"/><rect x="129.22" y="79.54" width="1.3" height="262.96"/><rect x="130.59" y="337.39" width="1.3" height="5.11"/><rect x="131.96" y="327.18" width="1.3" height="15.32"/><rect x="133.33" y="339.95" width="1.3" height="2.55"/><rect x="134.70" y="334.84" width="1.3" height="7.66"/><rect x="136.07" y="339.95" width="1.3" height="2.55"/><rect x="137.44" y="337.39" width="1.3" height="5.11"/><rect x="138.81" y="288.89" width="1.3" height="53.61"/><rect x="140.18" y="339.95" width="1.3" height="2.55"/><rect x="141.55" y="339.95" width="1.3" height="2.55"/><rect x="142.92" y="329.74" width="1.3" height="12.77"/><rect x="144.29" y="304.20" width="1.3" height="38.30"/><rect x="145.67" y="339.95" width="1.3" height="2.55"/><rect x="147.04" y="337.39" width="1.3" height="5.11"/><rect x="148.41" y="337.39" width="1.3" height="5.11"/><rect x="149.78" y="334.84" width="1.3" height="7.66"/><rect x="151.15" y="327.18" width="1.3" height="15.32"/><rect x="152.52" y="334.84" width="1.3" height="7.66"/><rect x="153.89" y="337.39" width="1.3" height="5.11"/><rect x="155.26" y="334.84" width="1.3" height="7.66"/><rect x="156.63" y="332.29" width="1.3" height="10.21"/><rect x="158.00" y="337.39" width="1.3" height="5.11"/><rect x="159.37" y="235.27" width="1.3" height="107.23"/><rect x="160.74" y="337.39" width="1.3" height="5.11"/><rect x="162.11" y="334.84" width="1.3" height="7.66"/><rect x="163.49" y="337.39" width="1.3" height="5.11"/><rect x="164.86" y="296.55" width="1.3" height="45.95"/><rect x="166.23" y="322.08" width="1.3" height="20.42"/><rect x="167.60" y="337.39" width="1.3" height="5.11"/><rect x="168.97" y="337.39" width="1.3" height="5.11"/><rect x="170.34" y="339.95" width="1.3" height="2.55"/><rect x="171.71" y="324.63" width="1.3" height="17.87"/><rect x="173.08" y="329.74" width="1.3" height="12.77"/><rect x="174.45" y="334.84" width="1.3" height="7.66"/><rect x="175.82" y="245.49" width="1.3" height="97.01"/><rect x="177.19" y="339.95" width="1.3" height="2.55"/><rect x="178.56" y="337.39" width="1.3" height="5.11"/><rect x="179.94" y="339.95" width="1.3" height="2.55"/><rect x="181.31" y="332.29" width="1.3" height="10.21"/><rect x="182.68" y="166.34" width="1.3" height="176.16"/><rect x="184.05" y="339.95" width="1.3" height="2.55"/><rect x="185.42" y="339.95" width="1.3" height="2.55"/><rect x="186.79" y="332.29" width="1.3" height="10.21"/><rect x="188.16" y="339.95" width="1.3" height="2.55"/><rect x="189.53" y="332.29" width="1.3" height="10.21"/><rect x="190.90" y="327.18" width="1.3" height="15.32"/><rect x="192.27" y="337.39" width="1.3" height="5.11"/><rect x="193.64" y="334.84" width="1.3" height="7.66"/><rect x="195.01" y="334.84" width="1.3" height="7.66"/><rect x="196.39" y="334.84" width="1.3" height="7.66"/><rect x="197.76" y="334.84" width="1.3" height="7.66"/><rect x="199.13" y="339.95" width="1.3" height="2.55"/><rect x="200.50" y="319.52" width="1.3" height="22.98"/><rect x="201.87" y="316.97" width="1.3" height="25.53"/><rect x="203.24" y="337.39" width="1.3" height="5.11"/><rect x="204.61" y="322.08" width="1.3" height="20.42"/><rect x="205.98" y="337.39" width="1.3" height="5.11"/><rect x="207.35" y="291.44" width="1.3" height="51.06"/><rect x="208.72" y="339.95" width="1.3" height="2.55"/><rect x="210.09" y="339.95" width="1.3" height="2.55"/><rect x="211.46" y="339.95" width="1.3" height="2.55"/><rect x="212.83" y="332.29" width="1.3" height="10.21"/><rect x="214.21" y="329.74" width="1.3" height="12.77"/><rect x="215.58" y="339.95" width="1.3" height="2.55"/><rect x="216.95" y="337.39" width="1.3" height="5.11"/><rect x="218.32" y="339.95" width="1.3" height="2.55"/><rect x="219.69" y="337.39" width="1.3" height="5.11"/><rect x="221.06" y="337.39" width="1.3" height="5.11"/><rect x="222.43" y="334.84" width="1.3" height="7.66"/><rect x="223.80" y="337.39" width="1.3" height="5.11"/><rect x="225.17" y="329.74" width="1.3" height="12.77"/><rect x="226.54" y="332.29" width="1.3" height="10.21"/><rect x="227.91" y="337.39" width="1.3" height="5.11"/><rect x="229.28" y="339.95" width="1.3" height="2.55"/><rect x="230.66" y="337.39" width="1.3" height="5.11"/><rect x="232.03" y="329.74" width="1.3" height="12.77"/><rect x="233.40" y="339.95" width="1.3" height="2.55"/><rect x="234.77" y="327.18" width="1.3" height="15.32"/><rect x="236.14" y="337.39" width="1.3" height="5.11"/><rect x="237.51" y="332.29" width="1.3" height="10.21"/><rect x="238.88" y="334.84" width="1.3" height="7.66"/><rect x="240.25" y="309.31" width="1.3" height="33.19"/><rect x="241.62" y="339.95" width="1.3" height="2.55"/><rect x="242.99" y="327.18" width="1.3" height="15.32"/><rect x="244.36" y="339.95" width="1.3" height="2.55"/><rect x="245.73" y="334.84" width="1.3" height="7.66"/><rect x="247.10" y="337.39" width="1.3" height="5.11"/><rect x="248.48" y="329.74" width="1.3" height="12.77"/><rect x="249.85" y="339.95" width="1.3" height="2.55"/><rect x="251.22" y="334.84" width="1.3" height="7.66"/><rect x="252.59" y="339.95" width="1.3" height="2.55"/><rect x="253.96" y="337.39" width="1.3" height="5.11"/><rect x="255.33" y="334.84" width="1.3" height="7.66"/><rect x="256.70" y="334.84" width="1.3" height="7.66"/><rect x="258.07" y="334.84" width="1.3" height="7.66"/><rect x="259.44" y="339.95" width="1.3" height="2.55"/><rect x="260.81" y="339.95" width="1.3" height="2.55"/><rect x="262.18" y="339.95" width="1.3" height="2.55"/><rect x="263.55" y="337.39" width="1.3" height="5.11"/><rect x="264.93" y="324.63" width="1.3" height="17.87"/><rect x="266.30" y="337.39" width="1.3" height="5.11"/><rect x="267.67" y="337.39" width="1.3" height="5.11"/><rect x="269.04" y="339.95" width="1.3" height="2.55"/><rect x="270.41" y="334.84" width="1.3" height="7.66"/><rect x="271.78" y="339.95" width="1.3" height="2.55"/><rect x="273.15" y="337.39" width="1.3" height="5.11"/><rect x="274.52" y="332.29" width="1.3" height="10.21"/><rect x="275.89" y="334.84" width="1.3" height="7.66"/><rect x="277.26" y="334.84" width="1.3" height="7.66"/><rect x="278.63" y="337.39" width="1.3" height="5.11"/><rect x="280.00" y="337.39" width="1.3" height="5.11"/><rect x="281.37" y="339.95" width="1.3" height="2.55"/><rect x="282.75" y="332.29" width="1.3" height="10.21"/><rect x="284.12" y="339.95" width="1.3" height="2.55"/><rect x="285.49" y="329.74" width="1.3" height="12.77"/><rect x="286.86" y="332.29" width="1.3" height="10.21"/><rect x="288.23" y="337.39" width="1.3" height="5.11"/><rect x="289.60" y="337.39" width="1.3" height="5.11"/><rect x="290.97" y="337.39" width="1.3" height="5.11"/><rect x="292.34" y="339.95" width="1.3" height="2.55"/><rect x="293.71" y="337.39" width="1.3" height="5.11"/><rect x="295.08" y="337.39" width="1.3" height="5.11"/><rect x="296.45" y="334.84" width="1.3" height="7.66"/><rect x="297.82" y="339.95" width="1.3" height="2.55"/><rect x="299.20" y="316.97" width="1.3" height="25.53"/><rect x="300.57" y="334.84" width="1.3" height="7.66"/><rect x="301.94" y="339.95" width="1.3" height="2.55"/><rect x="303.31" y="309.31" width="1.3" height="33.19"/><rect x="304.68" y="339.95" width="1.3" height="2.55"/><rect x="306.05" y="337.39" width="1.3" height="5.11"/><rect x="307.42" y="339.95" width="1.3" height="2.55"/><rect x="308.79" y="332.29" width="1.3" height="10.21"/><rect x="310.16" y="337.39" width="1.3" height="5.11"/><rect x="311.53" y="334.84" width="1.3" height="7.66"/><rect x="312.90" y="339.95" width="1.3" height="2.55"/><rect x="314.27" y="334.84" width="1.3" height="7.66"/><rect x="315.64" y="339.95" width="1.3" height="2.55"/><rect x="317.02" y="337.39" width="1.3" height="5.11"/><rect x="318.39" y="334.84" width="1.3" height="7.66"/><rect x="319.76" y="329.74" width="1.3" height="12.77"/><rect x="321.13" y="334.84" width="1.3" height="7.66"/><rect x="322.50" y="339.95" width="1.3" height="2.55"/><rect x="323.87" y="339.95" width="1.3" height="2.55"/><rect x="325.24" y="339.95" width="1.3" height="2.55"/><rect x="326.61" y="337.39" width="1.3" height="5.11"/><rect x="327.98" y="337.39" width="1.3" height="5.11"/><rect x="329.35" y="334.84" width="1.3" height="7.66"/><rect x="330.72" y="337.39" width="1.3" height="5.11"/><rect x="332.09" y="339.95" width="1.3" height="2.55"/><rect x="333.47" y="337.39" width="1.3" height="5.11"/><rect x="334.84" y="337.39" width="1.3" height="5.11"/><rect x="336.21" y="337.39" width="1.3" height="5.11"/><rect x="337.58" y="337.39" width="1.3" height="5.11"/><rect x="338.95" y="337.39" width="1.3" height="5.11"/><rect x="340.32" y="337.39" width="1.3" height="5.11"/><rect x="341.69" y="337.39" width="1.3" height="5.11"/><rect x="343.06" y="334.84" width="1.3" height="7.66"/><rect x="344.43" y="339.95" width="1.3" height="2.55"/><rect x="345.80" y="337.39" width="1.3" height="5.11"/><rect x="347.17" y="337.39" width="1.3" height="5.11"/><rect x="348.54" y="334.84" width="1.3" height="7.66"/><rect x="349.91" y="339.95" width="1.3" height="2.55"/><rect x="351.29" y="339.95" width="1.3" height="2.55"/><rect x="352.66" y="337.39" width="1.3" height="5.11"/><rect x="354.03" y="334.84" width="1.3" height="7.66"/><rect x="355.40" y="329.74" width="1.3" height="12.77"/><rect x="356.77" y="337.39" width="1.3" height="5.11"/><rect x="358.14" y="339.95" width="1.3" height="2.55"/><rect x="359.51" y="332.29" width="1.3" height="10.21"/><rect x="360.88" y="339.95" width="1.3" height="2.55"/><rect x="362.25" y="339.95" width="1.3" height="2.55"/><rect x="363.62" y="339.95" width="1.3" height="2.55"/><rect x="364.99" y="329.74" width="1.3" height="12.77"/><rect x="366.36" y="339.95" width="1.3" height="2.55"/><rect x="367.74" y="339.95" width="1.3" height="2.55"/><rect x="369.11" y="339.95" width="1.3" height="2.55"/><rect x="370.48" y="337.39" width="1.3" height="5.11"/><rect x="371.85" y="337.39" width="1.3" height="5.11"/><rect x="373.22" y="334.84" width="1.3" height="7.66"/><rect x="374.59" y="339.95" width="1.3" height="2.55"/><rect x="375.96" y="337.39" width="1.3" height="5.11"/><rect x="377.33" y="337.39" width="1.3" height="5.11"/><rect x="378.70" y="337.39" width="1.3" height="5.11"/><rect x="380.07" y="332.29" width="1.3" height="10.21"/><rect x="381.44" y="339.95" width="1.3" height="2.55"/><rect x="382.81" y="337.39" width="1.3" height="5.11"/><rect x="384.19" y="339.95" width="1.3" height="2.55"/><rect x="385.56" y="339.95" width="1.3" height="2.55"/><rect x="386.93" y="339.95" width="1.3" height="2.55"/><rect x="388.30" y="327.18" width="1.3" height="15.32"/><rect x="389.67" y="337.39" width="1.3" height="5.11"/><rect x="391.04" y="339.95" width="1.3" height="2.55"/><rect x="392.41" y="339.95" width="1.3" height="2.55"/><rect x="393.78" y="339.95" width="1.3" height="2.55"/><rect x="395.15" y="337.39" width="1.3" height="5.11"/><rect x="396.52" y="339.95" width="1.3" height="2.55"/><rect x="397.89" y="337.39" width="1.3" height="5.11"/><rect x="399.26" y="339.95" width="1.3" height="2.55"/><rect x="400.63" y="337.39" width="1.3" height="5.11"/><rect x="402.01" y="339.95" width="1.3" height="2.55"/><rect x="403.38" y="339.95" width="1.3" height="2.55"/><rect x="404.75" y="339.95" width="1.3" height="2.55"/><rect x="406.12" y="337.39" width="1.3" height="5.11"/><rect x="407.49" y="339.95" width="1.3" height="2.55"/><rect x="408.86" y="339.95" width="1.3" height="2.55"/><rect x="410.23" y="339.95" width="1.3" height="2.55"/><rect x="411.60" y="339.95" width="1.3" height="2.55"/><rect x="412.97" y="339.95" width="1.3" height="2.55"/><rect x="414.34" y="339.95" width="1.3" height="2.55"/><rect x="415.71" y="339.95" width="1.3" height="2.55"/><rect x="417.08" y="339.95" width="1.3" height="2.55"/><rect x="418.46" y="339.95" width="1.3" height="2.55"/><rect x="419.83" y="339.95" width="1.3" height="2.55"/><rect x="421.20" y="339.95" width="1.3" height="2.55"/><rect x="422.57" y="337.39" width="1.3" height="5.11"/><rect x="423.94" y="339.95" width="1.3" height="2.55"/><rect x="425.31" y="339.95" width="1.3" height="2.55"/><rect x="426.68" y="339.95" width="1.3" height="2.55"/><rect x="428.05" y="339.95" width="1.3" height="2.55"/><rect x="429.42" y="339.95" width="1.3" height="2.55"/><rect x="430.79" y="339.95" width="1.3" height="2.55"/><rect x="432.16" y="339.95" width="1.3" height="2.55"/><rect x="433.53" y="339.95" width="1.3" height="2.55"/><rect x="434.90" y="339.95" width="1.3" height="2.55"/><rect x="436.28" y="339.95" width="1.3" height="2.55"/><rect x="437.65" y="339.95" width="1.3" height="2.55"/><rect x="439.02" y="339.95" width="1.3" height="2.55"/><rect x="440.39" y="339.95" width="1.3" height="2.55"/><rect x="441.76" y="339.95" width="1.3" height="2.55"/><rect x="443.13" y="339.95" width="1.3" height="2.55"/><rect x="444.50" y="339.95" width="1.3" height="2.55"/><rect x="445.87" y="339.95" width="1.3" height="2.55"/><rect x="447.24" y="339.95" width="1.3" height="2.55"/><rect x="448.61" y="339.95" width="1.3" height="2.55"/><rect x="449.98" y="339.95" width="1.3" height="2.55"/><rect x="451.35" y="339.95" width="1.3" height="2.55"/><rect x="452.73" y="339.95" width="1.3" height="2.55"/><rect x="454.10" y="339.95" width="1.3" height="2.55"/><rect x="455.47" y="339.95" width="1.3" height="2.55"/><rect x="456.84" y="339.95" width="1.3" height="2.55"/><rect x="458.21" y="339.95" width="1.3" height="2.55"/><rect x="459.58" y="339.95" width="1.3" height="2.55"/><rect x="460.95" y="339.95" width="1.3" height="2.55"/></g><path d="M86.00 342.50 V346.40 M87.37 342.50 V346.40 M88.74 342.50 V346.40 M90.11 342.50 V346.40 M91.48 342.50 V346.40 M92.85 342.50 V346.40 M94.22 342.50 V346.40 M95.60 342.50 V346.40 M96.97 342.50 V346.40 M98.34 342.50 V346.40 M99.71 342.50 V346.40 M101.08 342.50 V346.40 M102.45 342.50 V346.40 M103.82 342.50 V346.40 M105.19 342.50 V346.40 M106.56 342.50 V346.40 M107.93 342.50 V346.40 M109.30 342.50 V346.40 M110.67 342.50 V346.40 M112.05 342.50 V346.40 M113.42 342.50 V346.40 M114.79 342.50 V346.40 M116.16 342.50 V346.40 M117.53 342.50 V346.40 M118.90 342.50 V346.40 M120.27 342.50 V346.40 M121.64 342.50 V346.40 M123.01 342.50 V346.40 M124.38 342.50 V346.40 M125.75 342.50 V346.40 M127.12 342.50 V346.40 M128.49 342.50 V346.40 M129.87 342.50 V346.40 M131.24 342.50 V346.40 M132.61 342.50 V346.40 M133.98 342.50 V346.40 M135.35 342.50 V346.40 M136.72 342.50 V346.40 M138.09 342.50 V346.40 M139.46 342.50 V346.40 M140.83 342.50 V346.40 M142.20 342.50 V346.40 M143.57 342.50 V346.40 M144.94 342.50 V346.40 M146.32 342.50 V346.40 M147.69 342.50 V346.40 M149.06 342.50 V346.40 M150.43 342.50 V346.40 M151.80 342.50 V346.40 M153.17 342.50 V346.40 M154.54 342.50 V346.40 M155.91 342.50 V346.40 M157.28 342.50 V346.40 M158.65 342.50 V346.40 M160.02 342.50 V346.40 M161.39 342.50 V346.40 M162.76 342.50 V346.40 M164.14 342.50 V346.40 M165.51 342.50 V346.40 M166.88 342.50 V346.40 M168.25 342.50 V346.40 M169.62 342.50 V346.40 M170.99 342.50 V346.40 M172.36 342.50 V346.40 M173.73 342.50 V346.40 M175.10 342.50 V346.40 M176.47 342.50 V346.40 M177.84 342.50 V346.40 M179.21 342.50 V346.40 M180.59 342.50 V346.40 M181.96 342.50 V346.40 M183.33 342.50 V346.40 M184.70 342.50 V346.40 M186.07 342.50 V346.40 M187.44 342.50 V346.40 M188.81 342.50 V346.40 M190.18 342.50 V346.40 M191.55 342.50 V346.40 M192.92 342.50 V346.40 M194.29 342.50 V346.40 M195.66 342.50 V346.40 M197.04 342.50 V346.40 M198.41 342.50 V346.40 M199.78 342.50 V346.40 M201.15 342.50 V346.40 M202.52 342.50 V346.40 M203.89 342.50 V346.40 M205.26 342.50 V346.40 M206.63 342.50 V346.40 M208.00 342.50 V346.40 M209.37 342.50 V346.40 M210.74 342.50 V346.40 M212.11 342.50 V346.40 M213.48 342.50 V346.40 M214.86 342.50 V346.40 M216.23 342.50 V346.40 M217.60 342.50 V346.40 M218.97 342.50 V346.40 M220.34 342.50 V346.40 M221.71 342.50 V346.40 M223.08 342.50 V346.40 M224.45 342.50 V346.40 M225.82 342.50 V346.40 M227.19 342.50 V346.40 M228.56 342.50 V346.40 M229.93 342.50 V346.40 M231.31 342.50 V346.40 M232.68 342.50 V346.40 M234.05 342.50 V346.40 M235.42 342.50 V346.40 M236.79 342.50 V346.40 M238.16 342.50 V346.40 M239.53 342.50 V346.40 M240.90 342.50 V346.40 M242.27 342.50 V346.40 M243.64 342.50 V346.40 M245.01 342.50 V346.40 M246.38 342.50 V346.40 M247.75 342.50 V346.40 M249.13 342.50 V346.40 M250.50 342.50 V346.40 M251.87 342.50 V346.40 M253.24 342.50 V346.40 M254.61 342.50 V346.40 M255.98 342.50 V346.40 M257.35 342.50 V346.40 M258.72 342.50 V346.40 M260.09 342.50 V346.40 M261.46 342.50 V346.40 M262.83 342.50 V346.40 M264.20 342.50 V346.40 M265.58 342.50 V346.40 M266.95 342.50 V346.40 M268.32 342.50 V346.40 M269.69 342.50 V346.40 M271.06 342.50 V346.40 M272.43 342.50 V346.40 M273.80 342.50 V346.40 M275.17 342.50 V346.40 M276.54 342.50 V346.40 M277.91 342.50 V346.40 M279.28 342.50 V346.40 M280.65 342.50 V346.40 M282.02 342.50 V346.40 M283.40 342.50 V346.40 M284.77 342.50 V346.40 M286.14 342.50 V346.40 M287.51 342.50 V346.40 M288.88 342.50 V346.40 M290.25 342.50 V346.40 M291.62 342.50 V346.40 M292.99 342.50 V346.40 M294.36 342.50 V346.40 M295.73 342.50 V346.40 M297.10 342.50 V346.40 M298.47 342.50 V346.40 M299.85 342.50 V346.40 M301.22 342.50 V346.40 M302.59 342.50 V346.40 M303.96 342.50 V346.40 M305.33 342.50 V346.40 M306.70 342.50 V346.40 M308.07 342.50 V346.40 M309.44 342.50 V346.40 M310.81 342.50 V346.40 M312.18 342.50 V346.40 M313.55 342.50 V346.40 M314.92 342.50 V346.40 M316.29 342.50 V346.40 M317.67 342.50 V346.40 M319.04 342.50 V346.40 M320.41 342.50 V346.40 M321.78 342.50 V346.40 M323.15 342.50 V346.40 M324.52 342.50 V346.40 M325.89 342.50 V346.40 M327.26 342.50 V346.40 M328.63 342.50 V346.40 M330.00 342.50 V346.40 M331.37 342.50 V346.40 M332.74 342.50 V346.40 M334.12 342.50 V346.40 M335.49 342.50 V346.40 M336.86 342.50 V346.40 M338.23 342.50 V346.40 M339.60 342.50 V346.40 M340.97 342.50 V346.40 M342.34 342.50 V346.40 M343.71 342.50 V346.40 M345.08 342.50 V346.40 M346.45 342.50 V346.40 M347.82 342.50 V346.40 M349.19 342.50 V346.40 M350.56 342.50 V346.40 M351.94 342.50 V346.40 M353.31 342.50 V346.40 M354.68 342.50 V346.40 M356.05 342.50 V346.40 M357.42 342.50 V346.40 M358.79 342.50 V346.40 M360.16 342.50 V346.40 M361.53 342.50 V346.40 M362.90 342.50 V346.40 M364.27 342.50 V346.40 M365.64 342.50 V346.40 M367.01 342.50 V346.40 M368.39 342.50 V346.40 M369.76 342.50 V346.40 M371.13 342.50 V346.40 M372.50 342.50 V346.40 M373.87 342.50 V346.40 M375.24 342.50 V346.40 M376.61 342.50 V346.40 M377.98 342.50 V346.40 M379.35 342.50 V346.40 M380.72 342.50 V346.40 M382.09 342.50 V346.40 M383.46 342.50 V346.40 M384.84 342.50 V346.40 M386.21 342.50 V346.40 M387.58 342.50 V346.40 M388.95 342.50 V346.40 M390.32 342.50 V346.40 M391.69 342.50 V346.40 M393.06 342.50 V346.40 M394.43 342.50 V346.40 M395.80 342.50 V346.40 M397.17 342.50 V346.40 M398.54 342.50 V346.40 M399.91 342.50 V346.40 M401.28 342.50 V346.40 M402.66 342.50 V346.40 M404.03 342.50 V346.40 M405.40 342.50 V346.40 M406.77 342.50 V346.40 M408.14 342.50 V346.40 M409.51 342.50 V346.40 M410.88 342.50 V346.40 M412.25 342.50 V346.40 M413.62 342.50 V346.40 M414.99 342.50 V346.40 M416.36 342.50 V346.40 M417.73 342.50 V346.40 M419.11 342.50 V346.40 M420.48 342.50 V346.40 M421.85 342.50 V346.40 M423.22 342.50 V346.40 M424.59 342.50 V346.40 M425.96 342.50 V346.40 M427.33 342.50 V346.40 M428.70 342.50 V346.40 M430.07 342.50 V346.40 M431.44 342.50 V346.40 M432.81 342.50 V346.40 M434.18 342.50 V346.40 M435.55 342.50 V346.40 M436.93 342.50 V346.40 M438.30 342.50 V346.40 M439.67 342.50 V346.40 M441.04 342.50 V346.40 M442.41 342.50 V346.40 M443.78 342.50 V346.40 M445.15 342.50 V346.40 M446.52 342.50 V346.40 M447.89 342.50 V346.40 M449.26 342.50 V346.40 M450.63 342.50 V346.40 M452.00 342.50 V346.40 M453.38 342.50 V346.40 M454.75 342.50 V346.40 M456.12 342.50 V346.40 M457.49 342.50 V346.40 M458.86 342.50 V346.40 M460.23 342.50 V346.40 M461.60 342.50 V346.40" stroke="#000" stroke-width="1"/></svg>
<div class="a" style="left:50.60000000000002px;top:351.29999999999995px;width:446.4px;height:8.5px;background:#000;border-radius:1.5px;"></div>
<div class="a" style="left:52.299999999999955px;top:352.79999999999995px;width:0.5px;height:5.6px;background:#505050;"></div>
<div class="a" style="left:53.60000000000002px;top:352.79999999999995px;width:0.5px;height:5.6px;background:#505050;"></div>
<div class="a" style="left:55.200000000000045px;top:352.79999999999995px;width:0.5px;height:5.6px;background:#505050;"></div>
<div class="a" style="left:56.5px;top:352.79999999999995px;width:0.5px;height:5.6px;background:#505050;"></div>
<div class="a" style="left:58.0px;top:352.79999999999995px;width:0.5px;height:5.6px;background:#505050;"></div>
<div class="a" style="left:62.39999999999998px;top:352.79999999999995px;width:0.5px;height:5.6px;background:#505050;"></div>
<div class="a" style="left:70.60000000000002px;top:352.79999999999995px;width:0.5px;height:5.6px;background:#505050;"></div>
<div class="a" style="left:74.39999999999998px;top:352.79999999999995px;width:0.5px;height:5.6px;background:#505050;"></div>
<div class="a" style="left:473.5px;top:352.79999999999995px;width:0.5px;height:5.6px;background:#505050;"></div>
<div class="a" style="left:477.20000000000005px;top:352.79999999999995px;width:0.5px;height:5.6px;background:#505050;"></div>
<div class="a" style="left:482.29999999999995px;top:352.79999999999995px;width:0.5px;height:5.6px;background:#505050;"></div>
<div class="a" style="left:486.5px;top:352.79999999999995px;width:0.5px;height:5.6px;background:#505050;"></div>
<div class="a" style="left:490.5999999999999px;top:352.79999999999995px;width:0.5px;height:5.6px;background:#505050;"></div>
<div class="a" style="left:493.29999999999995px;top:352.79999999999995px;width:0.5px;height:5.6px;background:#505050;"></div>
<svg class="a" style="left:3px;top:391.5px;" width="18" height="15" viewBox="0 0 18 15"><path fill="#000" d="M9 0.8 L0.5 8.3 L1.6 9.6 L2.8 8.6 V14.5 H7.3 V10.5 H10.7 V14.5 H15.2 V8.6 L16.4 9.6 L17.5 8.3 L14.5 5.6 V1.5 H12.5 V3.8 Z"/></svg>
<svg class="a" style="left:26px;top:390.5px;" width="16" height="15.5" viewBox="0 0 16 15.5"><path d="M14.3 7.75 H3.5 M8.3 2 L2.2 7.75 L8.3 13.5" stroke="#808080" stroke-width="3.6" fill="none" stroke-linejoin="round" stroke-linecap="round"/></svg>
<svg class="a" style="left:47px;top:390.5px;" width="16" height="15.5" viewBox="0 0 16 15.5"><path d="M1.7 7.75 H12.5 M7.7 2 L13.8 7.75 L7.7 13.5" stroke="#808080" stroke-width="3.6" fill="none" stroke-linejoin="round" stroke-linecap="round"/></svg>
<div class="a" style="left:69.39999999999998px;top:386.70000000000005px;width:0.8px;height:20.3px;background:#d8d8d8;"></div>
<svg class="a" style="left:74.5px;top:388.5px;" width="19" height="19" viewBox="0 0 19 19"><path fill="#000" d="M9.5 0 L13 3.8 H10.7 V8.3 H15.2 V6 L19 9.5 L15.2 13 V10.7 H10.7 V15.2 H13 L9.5 19 L6 15.2 H8.3 V10.7 H3.8 V13 L0 9.5 L3.8 6 V8.3 H8.3 V3.8 H6 Z"/></svg>
<svg class="a" style="left:98px;top:389.5px;" width="18" height="17" viewBox="0 0 18 17"><circle cx="7" cy="7" r="5.4" stroke="#000" stroke-width="2.4" fill="none"/><path d="M10.8 10.8 L16.5 16" stroke="#000" stroke-width="2.6" stroke-linecap="round"/></svg>
<svg class="a" style="left:121px;top:391px;" width="16" height="14" viewBox="0 0 16 14"><path d="M0 2.3 H15.5 M0 7 H15.5 M0 11.7 H15.5" stroke="#000" stroke-width="1.4"/><rect x="3" y="0" width="3.2" height="4.6" fill="#000"/><rect x="9.5" y="4.7" width="3.2" height="4.6" fill="#000"/><rect x="4.5" y="9.4" width="3.2" height="4.6" fill="#000"/></svg>
<div class="a" style="left:142.5px;top:386.70000000000005px;width:0.8px;height:20.3px;background:#d8d8d8;"></div>
<svg class="a" style="left:149px;top:390.29999999999995px;" width="17" height="16" viewBox="0 0 17 16"><path fill="none" stroke="#000" stroke-width="1.8" d="M1 1 H13 L16 4 V15 H1 Z"/><rect x="4" y="1" width="7.5" height="4.5" fill="none" stroke="#000" stroke-width="1.6"/><rect x="3.5" y="9" width="10" height="6" fill="none" stroke="#000" stroke-width="1.6"/><rect x="8.5" y="1.5" width="2" height="3" fill="#000"/></svg>
</div>
</div></body></html>
